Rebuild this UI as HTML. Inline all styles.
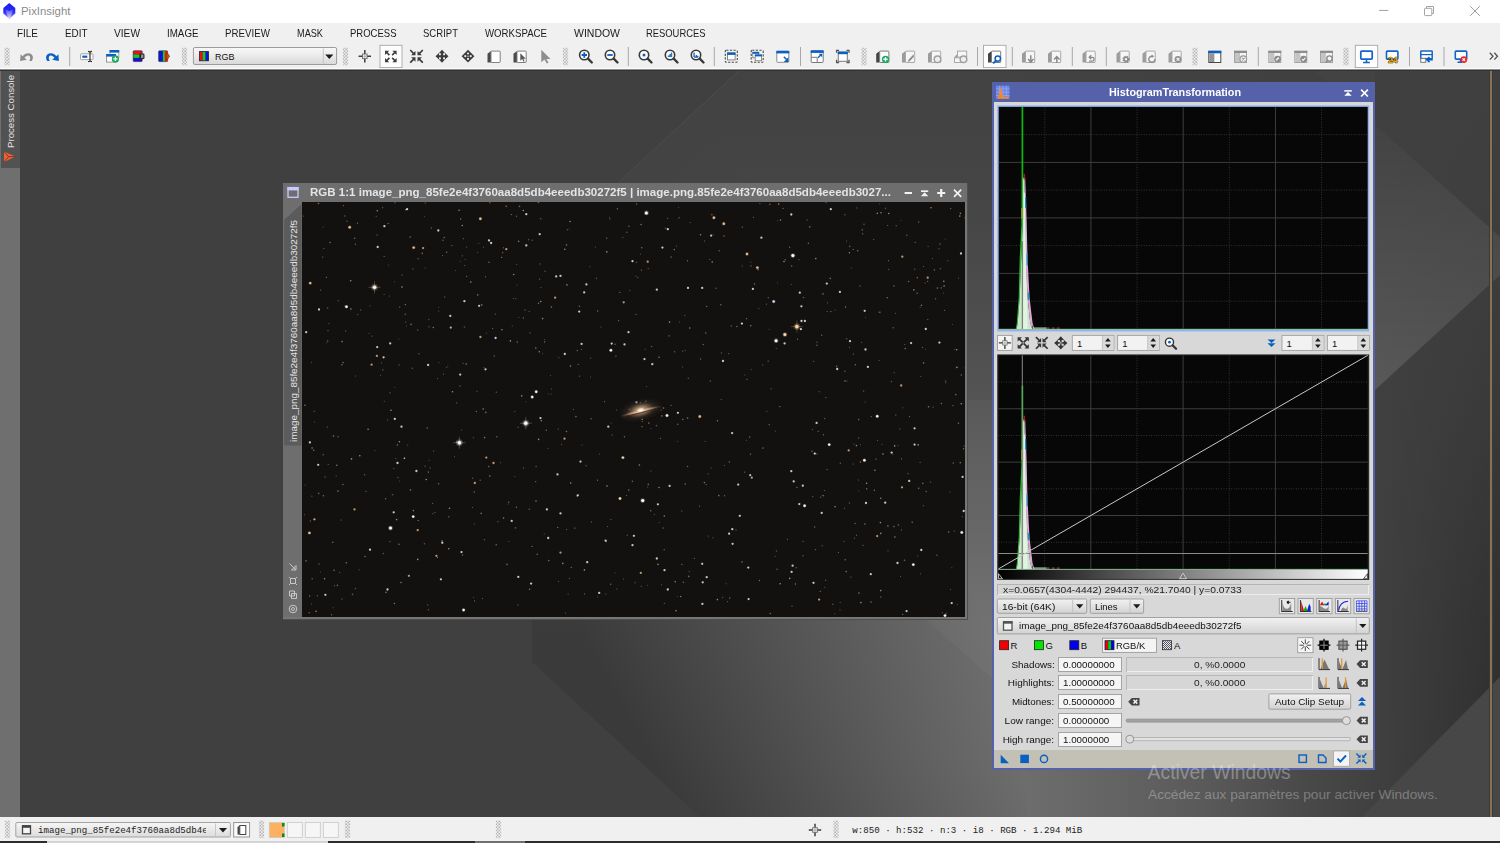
<!DOCTYPE html>
<html>
<head>
<meta charset="utf-8">
<title>PixInsight</title>
<style>
html,body{margin:0;padding:0;}
body{width:1500px;height:843px;overflow:hidden;position:relative;background:#404040;font-family:"Liberation Sans",sans-serif;font-size:10px;color:#000;}
.abs{position:absolute;}
#titlebar{left:0;top:0;width:1500px;height:23px;background:#fff;}
#titlebar .t{left:21px;top:5px;font-size:11.4px;color:#8a8a8a;}
#menubar{left:0;top:23px;width:1500px;height:21px;background:#f0f0f0;}
#menubar span{position:absolute;top:3.5px;font-size:10.8px;color:#1a1a1a;transform-origin:0 50%;white-space:nowrap;}
#toolbar{left:0;top:44px;width:1500px;height:24px;background:#f0f0f0;border-bottom:1px solid #fcfcfc;}
#tbline{left:0;top:69px;width:1500px;height:2px;background:linear-gradient(#8c8c8c 0,#8c8c8c 50%,#343434 50%,#343434 100%);}
#statusbar{left:0;top:817px;width:1500px;height:24px;background:#f0f0f0;}
#statusbot{left:0;top:841.4px;width:1500px;height:1.6px;background:linear-gradient(90deg,#2c2c2c 0,#2c2c2c 47px,#d4d4d4 47px,#d4d4d4 328px,#2c2c2c 328px,#2c2c2c 475px,#707070 475px,#707070 525px,#2c2c2c 525px);}
.mono{font-family:"Liberation Mono",monospace;}
#leftstrip{left:0;top:70px;width:20px;height:747px;background:#6f6f6f;}
#pctab{left:1px;top:70px;width:19px;height:98px;background:#525252;}
.vtext{position:absolute;transform-origin:0 0;transform:rotate(-90deg);white-space:nowrap;}
/* image window */
#imgwin{left:283px;top:183px;width:685px;height:436.7px;background:#6e6e6e;}
#imgtitle{left:27px;top:4px;font-size:10px;font-weight:bold;color:#e4e4e4;white-space:nowrap;transform-origin:0 50%;}
#imgarea{left:18.5px;top:19px;width:663.5px;height:414.5px;background:#121110;overflow:hidden;}
/* histogram panel */
#hpanel{left:992px;top:82.3px;width:383px;height:687.7px;background:#5561a9;}
.lbl{position:absolute;font-size:9.5px;color:#111;white-space:nowrap;}
.edit{position:absolute;background:#f6f6f6;border:1px solid #a8a8a8;box-sizing:border-box;font-size:9.5px;color:#111;white-space:nowrap;}
#h1{transform:scaleX(1.0798)}
#h6{transform:scaleX(1.0819)}
#h7{transform:scaleX(1.0737)}
#h8{transform:scaleX(0.9948)}
#h9{transform:scaleX(1.0429)}
#h13{transform:scaleX(0.9911)}
#h15{transform:scaleX(1.0375)}
#h16{transform:scaleX(1.0298)}
#h17{transform:scaleX(1.0483)}
#h18{transform:scaleX(1.0298)}
#h19{transform:scaleX(1.0270)}
#h20{transform:scaleX(1.0298)}
#h21{transform:scaleX(1.0507)}
#h22{transform:scaleX(1.0307)}
#h23{transform:scaleX(1.0483)}
#h24{transform:scaleX(1.0307)}
#h25{transform:scaleX(1.0670)}
#h26{transform:scaleX(1.0670)}
#h27{transform:scaleX(1.0452)}
#m1{transform:scaleX(0.9205)}
#m2{transform:scaleX(0.9149)}
#m3{transform:scaleX(0.9422)}
#m4{transform:scaleX(0.9053)}
#m5{transform:scaleX(0.9037)}
#m6{transform:scaleX(0.8494)}
#m7{transform:scaleX(0.8805)}
#m8{transform:scaleX(0.8840)}
#m9{transform:scaleX(0.8935)}
#m10{transform:scaleX(0.9710)}
#m11{transform:scaleX(0.8698)}
#imgtitle{transform:scaleX(1.1536)}
#imgvt{transform:rotate(-90deg) scaleX(1.0401)}
#pctext{transform:rotate(-90deg) scaleX(1.0165)}
</style>
</head>
<body>
<svg class="abs" style="left:0;top:70px" width="1500" height="747" viewBox="0 70 1500 747">
<defs>
<linearGradient id="bgL" x1="678" y1="811.800" x2="999.500" y2="639.500" gradientUnits="userSpaceOnUse">
<stop offset="0" stop-color="#3a3a3a"/><stop offset="1" stop-color="#747474"/>
</linearGradient>
<linearGradient id="bgR" x1="1027" y1="0" x2="1500" y2="0" gradientUnits="userSpaceOnUse">
<stop offset="0" stop-color="#6d6d6d"/><stop offset="0.37" stop-color="#5a5a5a"/><stop offset="0.6" stop-color="#484848"/><stop offset="0.738" stop-color="#404040"/><stop offset="1" stop-color="#2f2f2f"/>
</linearGradient>
<linearGradient id="bgv" x1="0" y1="70" x2="0" y2="760" gradientUnits="userSpaceOnUse">
<stop offset="0" stop-color="#404040" stop-opacity="0.96"/><stop offset="0.19" stop-color="#404040" stop-opacity="0.9"/><stop offset="0.48" stop-color="#404040" stop-opacity="0.62"/><stop offset="0.8" stop-color="#404040" stop-opacity="0.12"/><stop offset="1" stop-color="#404040" stop-opacity="0"/>
</linearGradient>
<linearGradient id="bgl" x1="0" y1="120" x2="0" y2="390" gradientUnits="userSpaceOnUse"><stop offset="0" stop-color="#fff" stop-opacity="0.015"/><stop offset="1" stop-color="#fff" stop-opacity="0.13"/></linearGradient>
</defs>
<rect x="0" y="70" width="1500" height="747" fill="#404040"/>
<polygon points="740,70 532,262 532,662 700,817 1027,817 1027,70" fill="url(#bgL)"/>
<polygon points="1027,70 1027,817 1362,817 1500,677 1500,70" fill="url(#bgR)"/>
<polygon points="740,70 532,262 532,662 700,817 1362,817 1500,677 1500,70" fill="url(#bgv)"/>
<polygon points="926,620 1027,709 1027,400 968,400 968,620" fill="#fff" fill-opacity="0.03"/>
<polygon points="1314,70 1500,237 1500,275 1375,390 1375,70" fill="url(#bgl)"/>
<polygon points="1500,677 1362,817 1500,817" fill="#474747"/>
<rect x="1489" y="70" width="4" height="747" fill="#383b3e"/>
<rect x="1490" y="70" width="2" height="747" fill="#8a7152"/>
</svg>

<!--LEFT-->
<div id="leftstrip" class="abs"></div>
<div id="pctab" class="abs"></div>
<span id="pctext" class="vtext" style="left:4.500px;top:148px;font-size:9.500px;color:#e0e0e0;">Process Console</span>
<svg class="abs" style="left:3px;top:150px" width="14" height="14" viewBox="0 0 14 14"><path d="M1 1.500L12.500 6.500L1 12Z" fill="#e8623a"/><path d="M1 1.500L5.500 6.700L1 12" fill="none" stroke="#7a2a14" stroke-width="0.800"/><path d="M5.500 6.700L12.500 6.500" stroke="#7a2a14" stroke-width="0.800"/></svg>
<!--CHROME-->
<div id="titlebar" class="abs"><svg class="abs" style="left:0;top:0" width="1500" height="23" viewBox="0 0 1500 23">
<defs><linearGradient id="pilogo" x1="0" y1="0" x2="0" y2="1"><stop offset="0" stop-color="#1a1aff"/><stop offset="0.55" stop-color="#2a2af0"/><stop offset="1" stop-color="#9a9af8"/></linearGradient>
<linearGradient id="pilogo2" x1="0" y1="0" x2="0" y2="1"><stop offset="0" stop-color="#5a5af4"/><stop offset="1" stop-color="#e8e8ff"/></linearGradient></defs>
<path d="M9.300 3L15.300 8V13.500L9.300 18.800L3.300 13.500V8Z" fill="url(#pilogo)"/>
<path d="M5.500 9.500L9.300 11L13 9.500L10.500 17.500L9.300 18.600L8 17.500Z" fill="url(#pilogo2)" fill-opacity="0.85"/>
<path d="M1379 10.400H1388.300" stroke="#a0a0a0" stroke-width="1"/>
<rect x="1424.500" y="8.300" width="7.300" height="7.300" rx="0.800" fill="#fff" stroke="#a4a4a4" stroke-width="1"/><path d="M1426.500 8.300V6.500H1433.500V13.500H1431.800" fill="none" stroke="#a4a4a4" stroke-width="1"/>
<path d="M1470.200 6.200L1479.800 15.800M1479.800 6.200L1470.200 15.800" stroke="#909090" stroke-width="0.900"/>
</svg>
<span class="abs t">PixInsight</span></div>
<div id="menubar" class="abs">
<span id="m1" style="left:17px">FILE</span><span id="m2" style="left:65px">EDIT</span><span id="m3" style="left:114px">VIEW</span><span id="m4" style="left:167px">IMAGE</span><span id="m5" style="left:225px">PREVIEW</span><span id="m6" style="left:297px">MASK</span><span id="m7" style="left:349.5px">PROCESS</span><span id="m8" style="left:422.5px">SCRIPT</span><span id="m9" style="left:484.5px">WORKSPACE</span><span id="m10" style="left:573.5px">WINDOW</span><span id="m11" style="left:646px">RESOURCES</span>
</div>
<div id="toolbar" class="abs"><svg class="abs" style="left:0;top:0" width="1500" height="25" viewBox="0 0 1500 25"><defs><pattern id="gripp" width="3.125" height="3.125" patternUnits="userSpaceOnUse"><rect x="0.300" y="0.300" width="1.100" height="1.100" fill="#808080"/><rect x="1.860" y="1.860" width="1.100" height="1.100" fill="#808080"/></pattern><pattern id="gripq" width="2" height="2" patternUnits="userSpaceOnUse"><rect width="1" height="1" fill="#7a7a7a"/><rect x="1" y="1" width="1" height="1" fill="#7a7a7a"/></pattern><linearGradient id="cbg" x1="0" y1="0" x2="0" y2="1"><stop offset="0" stop-color="#f8f8f8"/><stop offset="0.45" stop-color="#ececec"/><stop offset="1" stop-color="#d8d8d8"/></linearGradient></defs><rect x="4.5" y="3.700" width="5.200" height="17.500" fill="url(#gripp)"/><path d="M20.100 17L20.600 10.300L22.600 12.200C24.500 9.500 28.500 8.300 31 10C33.500 11.800 33.300 14.600 31.800 17L29.300 17C30.500 14.800 30.600 13 29.500 12C28 10.800 25.800 12 24.400 13.800L26.800 15.800Z" fill="#8c8c8c"/><g transform="translate(79,0) scale(-1,1)"><path d="M20.100 17L20.600 10.300L22.600 12.200C24.500 9.500 28.500 8.300 31 10C33.500 11.800 33.300 14.600 31.800 17L29.300 17C30.500 14.800 30.600 13 29.500 12C28 10.800 25.800 12 24.400 13.800L26.800 15.800Z" fill="#0a5fc2"/></g><rect x="69.2" y="3" width="1" height="19" fill="#a8a8a8"/><rect x="80.500" y="9.800" width="12.500" height="5.800" rx="0.800" fill="#fff" stroke="#a4a4a4" stroke-width="1"/><rect x="82.300" y="11.600" width="5" height="2.200" fill="#0a5fc2"/><path d="M88 7.300Q90 7.300 90 8.500Q90 7.300 92 7.300M88 17.700Q90 17.700 90 16.500Q90 17.700 92 17.700M90 8V17" stroke="#333" stroke-width="1.200" fill="none"/><rect x="110" y="6.500" width="8.800" height="7" fill="#fff" stroke="#a0a0a0" stroke-width="0.900"/><rect x="109.600" y="6" width="9.600" height="2.600" fill="#0a5fc2"/><rect x="106.600" y="10.500" width="9" height="7.600" fill="#fff" stroke="#8a8a8a" stroke-width="0.900"/><rect x="106.200" y="10" width="9.800" height="2.600" fill="#0a5fc2"/><circle cx="115.400" cy="14.900" r="3.600" fill="#1aa860"/><path d="M115.400 12.700v4.400M113.200 14.900h4.400" stroke="#e8fff0" stroke-width="1.400"/><rect x="133.200" y="6.800" width="9" height="10.800" rx="0.800" fill="#1010e0" stroke="#402020" stroke-width="0.600"/><rect x="133.500" y="7.100" width="8.400" height="3.400" fill="#f01010"/><rect x="133.500" y="10.500" width="8.400" height="3.400" fill="#10d010"/><rect x="139.300" y="9.600" width="5.200" height="5.400" rx="1.300" fill="#2a2a2a"/><rect x="141" y="10.600" width="2.400" height="3.400" rx="0.600" fill="#909090"/><rect x="158.600" y="6.800" width="9" height="10.800" rx="0.800" fill="#10d010" stroke="#202040" stroke-width="0.600"/><rect x="158.900" y="7.100" width="4" height="10.200" fill="#1010e0"/><rect x="165" y="7.100" width="2.400" height="10.200" fill="#f01010"/><path d="M164.800 9.300H167.800L170 12.300L167.800 15.300H164.800Z" fill="#f01010"/><path d="M167.300 10.300L169.300 12.300L167.500 14.500Z" fill="#10c010"/><rect x="181.9" y="3.700" width="5.200" height="17.500" fill="url(#gripp)"/><rect x="193.400" y="3.500" width="143.200" height="17" rx="1.500" fill="url(#cbg)" stroke="#9c9c9c" stroke-width="1"/><rect x="199.500" y="7.600" width="9" height="9.200" fill="#1010e0" stroke="#222" stroke-width="0.800"/><rect x="199.900" y="8" width="2.800" height="8.400" fill="#f01010"/><rect x="202.700" y="8" width="2.700" height="8.400" fill="#10d010"/><text x="215" y="15.700" font-family="Liberation Sans" font-size="9.600" fill="#111" textLength="19.500" lengthAdjust="spacingAndGlyphs">RGB</text><path d="M323.300 4.500V19.500" stroke="#c4c4c4" stroke-width="1"/><path d="M325.200 10.400H333.400L329.300 14.900Z" fill="#1a1a1a"/><rect x="342.9" y="3.700" width="5.200" height="17.500" fill="url(#gripp)"/><g transform="translate(356.8,4.3)"><path d="M8 1.800v12.400M1.800 8h12.400" stroke="#3c3c3c" stroke-width="1.500"/><rect x="5.700" y="5.700" width="4.600" height="4.600" fill="#f0f0f0" stroke="#6a6a6a" stroke-width="0.900"/><path d="M8 6.500v3M6.500 8h3" stroke="#9a9a9a" stroke-width="0.700"/></g><rect x="380" y="1.300" width="22" height="22.300" fill="#fdfdfd" stroke="#a6a6a6" stroke-width="0.900"/><g transform="translate(382.8,4.5)"><g transform="translate(8,8) scale(1,1)"><path d="M1.400 1.400L4.500 4.500" stroke="#3c3c3c" stroke-width="1.700"/><path d="M5.800 1.600V5.800H1.600Z" fill="#3c3c3c"/></g><g transform="translate(8,8) scale(-1,1)"><path d="M1.400 1.400L4.500 4.500" stroke="#3c3c3c" stroke-width="1.700"/><path d="M5.800 1.600V5.800H1.600Z" fill="#3c3c3c"/></g><g transform="translate(8,8) scale(1,-1)"><path d="M1.400 1.400L4.500 4.500" stroke="#3c3c3c" stroke-width="1.700"/><path d="M5.800 1.600V5.800H1.600Z" fill="#3c3c3c"/></g><g transform="translate(8,8) scale(-1,-1)"><path d="M1.400 1.400L4.500 4.500" stroke="#3c3c3c" stroke-width="1.700"/><path d="M5.800 1.600V5.800H1.600Z" fill="#3c3c3c"/></g></g><g transform="translate(408.5,4.3)"><g transform="translate(8,8) scale(1,1)"><path d="M2.500 2.500L6.300 6.300" stroke="#3c3c3c" stroke-width="1.700"/><path d="M1 5.400V1H5.400Z" fill="#3c3c3c"/></g><g transform="translate(8,8) scale(-1,1)"><path d="M2.500 2.500L6.300 6.300" stroke="#3c3c3c" stroke-width="1.700"/><path d="M1 5.400V1H5.400Z" fill="#3c3c3c"/></g><g transform="translate(8,8) scale(1,-1)"><path d="M2.500 2.500L6.300 6.300" stroke="#3c3c3c" stroke-width="1.700"/><path d="M1 5.400V1H5.400Z" fill="#3c3c3c"/></g><g transform="translate(8,8) scale(-1,-1)"><path d="M2.500 2.500L6.300 6.300" stroke="#3c3c3c" stroke-width="1.700"/><path d="M1 5.400V1H5.400Z" fill="#3c3c3c"/></g></g><g transform="translate(434,4.3)"><g transform="rotate(0 8 8)"><path d="M8 8V4" stroke="#3c3c3c" stroke-width="2.200"/><path d="M4.800 5L8 1.500L11.200 5Z" fill="#3c3c3c"/></g><g transform="rotate(90 8 8)"><path d="M8 8V4" stroke="#3c3c3c" stroke-width="2.200"/><path d="M4.800 5L8 1.500L11.200 5Z" fill="#3c3c3c"/></g><g transform="rotate(180 8 8)"><path d="M8 8V4" stroke="#3c3c3c" stroke-width="2.200"/><path d="M4.800 5L8 1.500L11.200 5Z" fill="#3c3c3c"/></g><g transform="rotate(270 8 8)"><path d="M8 8V4" stroke="#3c3c3c" stroke-width="2.200"/><path d="M4.800 5L8 1.500L11.200 5Z" fill="#3c3c3c"/></g></g><g transform="translate(460,4.2)"><path d="M8 1.600L14.400 8L8 14.400L1.600 8Z" fill="#3c3c3c"/><circle cx="8" cy="5.300" r="1.100" fill="#e8e8e8"/><circle cx="8" cy="10.700" r="1.100" fill="#e8e8e8"/><circle cx="5.300" cy="8" r="1.100" fill="#e8e8e8"/><circle cx="10.700" cy="8" r="1.100" fill="#e8e8e8"/><circle cx="8" cy="8" r="0.800" fill="#bbb"/></g><g transform="translate(486,4.3)"><path d="M1.500 5.500L5 2.800V14.200H1.500Z" fill="#4a4a4a"/><rect x="5" y="2.800" width="9.200" height="11.400" rx="0.600" fill="#fff" stroke="#808080" stroke-width="1"/></g><g transform="translate(512,4.3)"><path d="M1.500 5.500L5 2.800V14.200H1.500Z" fill="#4a4a4a"/><rect x="5" y="2.800" width="9.200" height="11.400" rx="0.600" fill="#fff" stroke="#808080" stroke-width="1"/><path d="M8.300 5V12.500L10.200 10.800L11.500 13.500L12.600 13L11.400 10.400H13.800Z" fill="#5a5a5a"/></g><g transform="translate(537.5,4.3)"><path d="M3.800 1.500V14L7 11.200L9.300 15.200L11 14.400L8.900 10.600H13Z" fill="#8e8e8e"/></g><rect x="562.9" y="3.700" width="5.200" height="17.500" fill="url(#gripp)"/><g transform="translate(577.8,4.3)"><circle cx="6.500" cy="6.700" r="4.700" fill="#fdfdfd" stroke="#3a3a3a" stroke-width="1.600"/><path d="M10.200 10.400L14 14.200" stroke="#3a3a3a" stroke-width="2.400" stroke-linecap="round"/><path d="M6.500 4V9.400M3.800 6.700H9.200" stroke="#0a5fc2" stroke-width="1.800"/></g><g transform="translate(603.5,4.3)"><circle cx="6.500" cy="6.700" r="4.700" fill="#fdfdfd" stroke="#3a3a3a" stroke-width="1.600"/><path d="M10.200 10.400L14 14.200" stroke="#3a3a3a" stroke-width="2.400" stroke-linecap="round"/><path d="M3.800 6.700H9.200" stroke="#0a5fc2" stroke-width="1.800"/></g><rect x="627.8" y="3" width="1" height="19" fill="#a8a8a8"/><g transform="translate(637.5,4.3)"><circle cx="6.500" cy="6.700" r="4.700" fill="#fdfdfd" stroke="#3a3a3a" stroke-width="1.600"/><path d="M10.200 10.400L14 14.200" stroke="#3a3a3a" stroke-width="2.400" stroke-linecap="round"/><circle cx="6.500" cy="6.700" r="1.500" fill="#0a5fc2"/></g><g transform="translate(663.5,4.3)"><circle cx="6.500" cy="6.700" r="4.700" fill="#fdfdfd" stroke="#3a3a3a" stroke-width="1.600"/><path d="M10.200 10.400L14 14.200" stroke="#3a3a3a" stroke-width="2.400" stroke-linecap="round"/><path d="M4.300 8.800V7.200H5.800V5.700H7.300V4.300H8.700V8.800Z" fill="#0a5fc2" fill-opacity="0.850"/></g><g transform="translate(689.5,4.3)"><circle cx="6.500" cy="6.700" r="4.700" fill="#fdfdfd" stroke="#3a3a3a" stroke-width="1.600"/><path d="M10.200 10.400L14 14.200" stroke="#3a3a3a" stroke-width="2.400" stroke-linecap="round"/><path d="M4.600 4.200V8.800M4.600 8.800H8.600M6.800 6.800v2M8.300 7.500v1.300" stroke="#0a5fc2" stroke-width="1.300" fill="none"/></g><rect x="713.8" y="3" width="1" height="19" fill="#a8a8a8"/><g transform="translate(723.3,4.3)"><rect x="2" y="2" width="12" height="12" rx="1" fill="none" stroke="#4a4a4a" stroke-width="1.100" stroke-dasharray="2.200 1.400"/><rect x="4.200" y="4.600" width="7.600" height="7" fill="#fff" stroke="#7a7a7a" stroke-width="0.900"/><rect x="3.800" y="4.200" width="8.400" height="2.400" fill="#0a5fc2"/></g><g transform="translate(749.2,4.3)"><rect x="2" y="2" width="12" height="12" rx="1" fill="none" stroke="#4a4a4a" stroke-width="1.100" stroke-dasharray="2.200 1.400"/><rect x="3.600" y="4" width="6" height="5.500" fill="#fff" stroke="#7a7a7a" stroke-width="0.800"/><rect x="3.300" y="3.600" width="6.600" height="1.900" fill="#0a5fc2"/><rect x="6" y="6.600" width="6.400" height="5.800" fill="#fff" stroke="#7a7a7a" stroke-width="0.800"/><rect x="5.700" y="6.200" width="7" height="1.900" fill="#0a5fc2"/></g><g transform="translate(774.8,4.3)"><rect x="2" y="3" width="12" height="11" rx="0.800" fill="#fff" stroke="#8a8a8a" stroke-width="1"/><rect x="1.500" y="2.500" width="13" height="2.600" fill="#0a5fc2"/><path d="M9 8.500L12 11.500" stroke="#0a5fc2" stroke-width="1.400"/><path d="M13.600 9V13.600H9Z" fill="#0a5fc2"/></g><rect x="800.0" y="3" width="1" height="19" fill="#a8a8a8"/><g transform="translate(809.2,4.3)"><rect x="2" y="2.600" width="12" height="11.600" rx="0.800" fill="#fff" stroke="#7a7a7a" stroke-width="1"/><rect x="1.500" y="2" width="13" height="2.600" fill="#0a5fc2"/><path d="M2 9H8V14" fill="none" stroke="#7a7a7a" stroke-width="1"/><path d="M8.800 9.400L12 6.200" stroke="#0a5fc2" stroke-width="1.300"/><path d="M9.500 5.500H13V9Z" fill="#0a5fc2"/></g><g transform="translate(834.8,4.3)"><rect x="3.500" y="3.800" width="9" height="9.200" fill="#fff" stroke="#7a7a7a" stroke-width="1"/><rect x="3" y="3.300" width="10" height="2.600" fill="#0a5fc2"/><path d="M1.800 4.500V2H4.300M11.700 2H14.200V4.500M14.200 11.500V14.200H11.700M4.300 14.200H1.800V11.500" fill="none" stroke="#555" stroke-width="1.300"/></g><rect x="861.4" y="3.700" width="5.200" height="17.500" fill="url(#gripp)"/><g transform="translate(874.7,4.3)"><path d="M1.500 5.500L5 2.800V14.200H1.500Z" fill="#444"/><rect x="5" y="2.800" width="9.200" height="11.400" rx="0.600" fill="#fff" stroke="#7a7a7a" stroke-width="1"/><circle cx="10.800" cy="11" r="3.600" fill="#1aa860"/><path d="M10.800 8.800v4.400M8.600 11h4.400" stroke="#e8fff0" stroke-width="1.400"/></g><g transform="translate(900.5,4.3)"><path d="M1.500 5.500L5 2.800V14.200H1.500Z" fill="#9c9c9c"/><rect x="5" y="2.800" width="9.200" height="11.400" rx="0.600" fill="#f6f6f6" stroke="#a8a8a8" stroke-width="1"/><path d="M7 13.800L7.600 11.600L12.600 6.200L14.300 7.800L9.200 13.200Z" fill="#8c8c8c" stroke="#f0f0f0" stroke-width="0.500"/></g><g transform="translate(926.5,4.3)"><path d="M1.500 5.500L5 2.800V14.200H1.500Z" fill="#9c9c9c"/><rect x="5" y="2.800" width="9.200" height="11.400" rx="0.600" fill="#f6f6f6" stroke="#a8a8a8" stroke-width="1"/><circle cx="11" cy="11" r="3.300" fill="#eee" stroke="#a0a0a0" stroke-width="1.500"/></g><g transform="translate(952.5,4.3)"><path d="M1.800 9L5 5.500V14.200H1.800Z" fill="#9c9c9c"/><rect x="5" y="2.800" width="9.200" height="6" fill="#f6f6f6" stroke="#a8a8a8" stroke-width="1"/><rect x="2" y="9.500" width="8" height="4.700" fill="#f6f6f6" stroke="#a8a8a8" stroke-width="1"/><circle cx="11" cy="11" r="3.300" fill="#eee" stroke="#a0a0a0" stroke-width="1.500"/></g><rect x="977.0" y="3" width="1" height="19" fill="#a8a8a8"/><rect x="983.5" y="1.300" width="22.5" height="22.300" fill="#fdfdfd" stroke="#a6a6a6" stroke-width="0.900"/><g transform="translate(986.5,4.3)"><path d="M1.500 5.500L5 2.800V14.200H1.500Z" fill="#444"/><rect x="5" y="2.800" width="9.200" height="11.400" rx="0.600" fill="#fff" stroke="#7a7a7a" stroke-width="1"/><circle cx="11.300" cy="10.300" r="2.700" fill="#fff" stroke="#0a5fc2" stroke-width="1.500"/><path d="M9.300 12.400L7.200 14.600" stroke="#0a5fc2" stroke-width="1.800" stroke-linecap="round"/></g><rect x="1011.8" y="3" width="1" height="19" fill="#a8a8a8"/><g transform="translate(1020.5,4.3)"><path d="M1.500 5.500L5 2.800V14.200H1.500Z" fill="#9c9c9c"/><rect x="5" y="2.800" width="9.200" height="11.400" rx="0.600" fill="#f6f6f6" stroke="#a8a8a8" stroke-width="1"/><path d="M10.300 7V13.500M7.600 10.800L10.300 13.800L13 10.800" fill="none" stroke="#8a8a8a" stroke-width="1.500"/></g><g transform="translate(1046.5,4.3)"><path d="M1.500 5.500L5 2.800V14.200H1.500Z" fill="#9c9c9c"/><rect x="5" y="2.800" width="9.200" height="11.400" rx="0.600" fill="#f6f6f6" stroke="#a8a8a8" stroke-width="1"/><path d="M10.300 14.500V8.500M7.600 11.200L10.300 8.200L13 11.200" fill="none" stroke="#8a8a8a" stroke-width="1.500"/></g><rect x="1071.8" y="3" width="1" height="19" fill="#a8a8a8"/><g transform="translate(1081,4.3)"><path d="M1.500 5.500L5 2.800V14.200H1.500Z" fill="#9c9c9c"/><rect x="5" y="2.800" width="9.200" height="11.400" rx="0.600" fill="#f6f6f6" stroke="#a8a8a8" stroke-width="1"/><path d="M8 12.800H11.500C13.500 12.800 13.500 9 11.500 9H8.500M10.300 7L8.200 9L10.300 11" fill="none" stroke="#8a8a8a" stroke-width="1.300"/></g><rect x="1105.8" y="3" width="1" height="19" fill="#a8a8a8"/><g transform="translate(1115,4.3)"><path d="M1.500 5.500L5 2.800V14.200H1.500Z" fill="#9c9c9c"/><rect x="5" y="2.800" width="9.200" height="11.400" rx="0.600" fill="#f6f6f6" stroke="#a8a8a8" stroke-width="1"/><circle cx="11" cy="11" r="2.500" fill="none" stroke="#8a8a8a" stroke-width="2.200" stroke-dasharray="1.300 0.700"/><circle cx="11" cy="11" r="1.900" fill="none" stroke="#8a8a8a" stroke-width="1.200"/></g><g transform="translate(1141,4.3)"><path d="M1.500 5.500L5 2.800V14.200H1.500Z" fill="#9c9c9c"/><rect x="5" y="2.800" width="9.200" height="11.400" rx="0.600" fill="#f6f6f6" stroke="#a8a8a8" stroke-width="1"/><path d="M13.800 11A3 3 0 1 1 11 8" fill="none" stroke="#8a8a8a" stroke-width="1.400"/><path d="M10.600 6.200L13.200 8L10.600 9.800Z" fill="#8a8a8a"/></g><g transform="translate(1167,4.3)"><path d="M1.500 5.500L5 2.800V14.200H1.500Z" fill="#9c9c9c"/><rect x="5" y="2.800" width="9.200" height="11.400" rx="0.600" fill="#f6f6f6" stroke="#a8a8a8" stroke-width="1"/><circle cx="11" cy="11" r="3.400" fill="#8f8f8f"/><path d="M9.600 9.600l2.800 2.800M12.400 9.600L9.600 12.400" stroke="#f4f4f4" stroke-width="1.200"/></g><rect x="1192.4" y="3.700" width="5.200" height="17.500" fill="url(#gripp)"/><g transform="translate(1206.8,4.3)"><rect x="2" y="3" width="12" height="11.200" fill="#fff" stroke="#4a4a4a" stroke-width="1"/><rect x="1.500" y="2.500" width="13" height="2.500" fill="#0a5fc2"/><rect x="2.500" y="5" width="5" height="8.700" fill="#b0b0b0"/><rect x="2.500" y="5" width="5" height="8.700" fill="url(#gripq)"/></g><g transform="translate(1232.5,4.3)"><rect x="2" y="3" width="12" height="11.200" fill="#f4f4f4" stroke="#a4a4a4" stroke-width="1"/><rect x="1.500" y="2.500" width="13" height="2.200" fill="#8e8e8e"/><rect x="2.500" y="4.700" width="5" height="9" fill="#c4c4c4"/><circle cx="10.800" cy="10.800" r="3.300" fill="#f2f2f2" stroke="#9a9a9a" stroke-width="1.200"/><path d="M9.500 9.500l2.600 2.600M12.100 9.500L9.500 12.100" stroke="#9a9a9a" stroke-width="1.200"/></g><rect x="1257.8" y="3" width="1" height="19" fill="#a8a8a8"/><g transform="translate(1266.8,4.3)"><rect x="2" y="3" width="12" height="11.200" fill="#f4f4f4" stroke="#a4a4a4" stroke-width="1"/><rect x="1.500" y="2.500" width="13" height="2.200" fill="#8e8e8e"/><rect x="2.500" y="4.700" width="5" height="9" fill="#c4c4c4"/><circle cx="10.800" cy="10.800" r="3.400" fill="#8a8a8a"/><path d="M9.300 12L12 9.300" stroke="#f4f4f4" stroke-width="1.600"/></g><g transform="translate(1292.8,4.3)"><rect x="2" y="3" width="12" height="11.200" fill="#f4f4f4" stroke="#a4a4a4" stroke-width="1"/><rect x="1.500" y="2.500" width="13" height="2.200" fill="#8e8e8e"/><rect x="2.500" y="4.700" width="5" height="9" fill="#c4c4c4"/><circle cx="10.800" cy="10.800" r="3.400" fill="#8a8a8a"/><path d="M9.200 10.800L10.400 12.100L12.500 9.600" fill="none" stroke="#f4f4f4" stroke-width="1.200"/></g><g transform="translate(1318.5,4.3)"><rect x="2" y="3" width="12" height="11.200" fill="#f4f4f4" stroke="#a4a4a4" stroke-width="1"/><rect x="1.500" y="2.500" width="13" height="2.200" fill="#8e8e8e"/><rect x="2.500" y="4.700" width="5" height="9" fill="#c4c4c4"/><circle cx="11" cy="10.300" r="2.700" fill="#f4f4f4" stroke="#8a8a8a" stroke-width="1.400"/><path d="M9 12.300L7.300 14.200" stroke="#8a8a8a" stroke-width="1.600"/></g><rect x="1343.4" y="3.700" width="5.200" height="17.500" fill="url(#gripp)"/><rect x="1355.3" y="1.300" width="22.40000000000009" height="22.300" fill="#fdfdfd" stroke="#a6a6a6" stroke-width="0.900"/><g transform="translate(1358.5,4.3)"><rect x="2.300" y="2.800" width="11.400" height="8" rx="0.800" fill="#fdfdfd" stroke="#1464c8" stroke-width="1.700"/><path d="M8 11V13.800M4.600 14.300H11.400" stroke="#1464c8" stroke-width="1.500"/></g><g transform="translate(1384.2,4.3)"><rect x="2.300" y="2.800" width="11.400" height="8" rx="0.800" fill="#fdfdfd" stroke="#1464c8" stroke-width="1.600"/><text x="8.600" y="14.800" font-family="Liberation Sans" font-weight="bold" font-size="8.800" text-anchor="middle" fill="#e8a800" stroke="#2a2000" stroke-width="0.700" paint-order="stroke">24</text></g><rect x="1409.0" y="3" width="1" height="19" fill="#a8a8a8"/><g transform="translate(1418.5,4.3)"><rect x="2.300" y="2.600" width="11.400" height="7.800" rx="0.600" fill="#fdfdfd" stroke="#1464c8" stroke-width="1.500"/><path d="M2.300 6.300H13.700" stroke="#1464c8" stroke-width="1.200"/><rect x="2.300" y="10" width="5" height="4" fill="#fff" stroke="#6a6a6a" stroke-width="0.900"/><path d="M14.300 11.300H8.800M11 8.800L8.300 11.300L11 13.800" fill="none" stroke="#0a5fc2" stroke-width="1.600"/></g><rect x="1443.5" y="3" width="1" height="19" fill="#a8a8a8"/><g transform="translate(1453,4.3)"><rect x="2.300" y="2.800" width="11.400" height="8" rx="0.800" fill="#fdfdfd" stroke="#1464c8" stroke-width="1.600"/><path d="M7.500 11V13.500M4.500 14H9" stroke="#1464c8" stroke-width="1.400"/><circle cx="10.800" cy="11.300" r="3.400" fill="#e42828"/><path d="M9.500 10l2.600 2.600M12.100 10l-2.600 2.600" stroke="#fff" stroke-width="1.200"/></g><path d="M1489.800 8.800L1493 12.200L1489.800 15.600M1494.300 8.800L1497.500 12.200L1494.300 15.600" fill="none" stroke="#505050" stroke-width="1.300"/></svg></div>
<div id="tbline" class="abs"></div>
<div id="imgwin" class="abs">
<div class="abs" style="left:682px;top:19px;width:2px;height:417px;background:#767676"></div>
<div class="abs" style="left:0;top:433.500px;width:685px;height:2.200px;background:#767676"></div>
<div class="abs" style="left:684px;top:0;width:1px;height:436.700px;background:#4e4e4e"></div>
<div class="abs" style="left:0;top:435.700px;width:685px;height:1px;background:#4e4e4e"></div>
<svg class="abs" style="left:0;top:0" width="30" height="437" viewBox="0 0 30 437">
<polygon points="1.200,36 18.500,20.500 18.500,262.500 1.200,262.500" fill="#5b5b5b"/>
<path d="M1.200 36L18.500 20.500" stroke="#747474" stroke-width="1" fill="none"/>
<rect x="5" y="4.600" width="10" height="9.700" fill="#6e6e6e" stroke="#c9c9ff" stroke-width="1.300"/><rect x="4.400" y="4" width="11.200" height="3.400" fill="#c9c9ff"/>
<g stroke="#cfcfcf" stroke-width="0.900" fill="none">
<path d="M6.500 380.500L13 387M13 382.500V387H8.500Z"/>
<path d="M7.500 395.500H12.500V400.500H7.500ZM7.500 395.500L6 394M12.500 395.500L14 394M7.500 400.500L6 402M12.500 400.500L14 402"/>
<path d="M6.500 408H11.500V413H6.500ZM8.500 410.500H13.500V415.500H8.500Z"/>
<circle cx="10" cy="426" r="3.800"/><circle cx="10" cy="426" r="1.500"/>
</g>
</svg>
<span id="imgtitle" class="abs">RGB 1:1 image_png_85fe2e4f3760aa8d5db4eeedb30272f5 | image.png.85fe2e4f3760aa8d5db4eeedb3027...</span>
<span id="imgvt" class="vtext" style="left:5px;top:259px;font-size:9.500px;color:#e6e6e6;">image_png_85fe2e4f3760aa8d5db4eeedb30272f5</span>
<svg class="abs" style="left:615px;top:0" width="70" height="19" viewBox="0 0 70 19">
<g stroke="#f2f2f2" stroke-width="2" fill="none">
<path d="M6.600 10H14"/>
<path d="M23 8.200H30.200" stroke-width="1.700"/><path d="M26.600 9.300L30.300 13.200H22.900Z" fill="#f2f2f2" stroke="none"/>
<path d="M39.200 10H47.200M43.200 6V14" stroke-width="2.200"/>
<path d="M56 6.600L63.200 13.800M63.200 6.600L56 13.800" stroke-width="1.700"/>
</g></svg>
<div id="imgarea" class="abs"><svg class="abs" style="left:0;top:0" width="663.5" height="414.5" viewBox="0 0 663.5 414.5"><defs><filter id="sb" x="-2%" y="-2%" width="104%" height="104%"><feGaussianBlur stdDeviation="0.55"/></filter><radialGradient id="gal0"><stop offset="0" stop-color="#a48868" stop-opacity="0.850"/><stop offset="0.300" stop-color="#70594a" stop-opacity="0.600"/><stop offset="0.550" stop-color="#4a3c30" stop-opacity="0.340"/><stop offset="0.800" stop-color="#2c241e" stop-opacity="0.120"/><stop offset="1" stop-color="#201a14" stop-opacity="0"/></radialGradient><radialGradient id="gal1"><stop offset="0" stop-color="#ffecd0" stop-opacity="0.900"/><stop offset="0.450" stop-color="#d8b088" stop-opacity="0.450"/><stop offset="1" stop-color="#806040" stop-opacity="0"/></radialGradient><radialGradient id="gal2"><stop offset="0" stop-color="#ffe8cc" stop-opacity="0.950"/><stop offset="0.600" stop-color="#c4a078" stop-opacity="0.600"/><stop offset="1" stop-color="#805838" stop-opacity="0"/></radialGradient><radialGradient id="gal3"><stop offset="0" stop-color="#fff" stop-opacity="1"/><stop offset="0.600" stop-color="#fff0d8" stop-opacity="0.700"/><stop offset="1" stop-color="#e8c098" stop-opacity="0"/></radialGradient></defs><g filter="url(#sb)"><circle cx="214.7" cy="62.5" r="0.5" fill="#6a625c"/><circle cx="544.5" cy="39.0" r="0.5" fill="#6c6c6c"/><circle cx="142.3" cy="35.6" r="0.8" fill="#6a625c"/><circle cx="159.6" cy="228.1" r="0.5" fill="#6c6c6c"/><circle cx="82.1" cy="92.4" r="0.5" fill="#6c6c6c"/><circle cx="388.2" cy="20.5" r="0.6" fill="#6a625c"/><circle cx="369.1" cy="55.1" r="0.8" fill="#5c5a5e"/><circle cx="358.5" cy="236.4" r="0.6" fill="#6a625c"/><circle cx="385.6" cy="264.5" r="0.7" fill="#6a625c"/><circle cx="363.2" cy="26.0" r="0.5" fill="#6c6c6c"/><circle cx="136.6" cy="281.7" r="0.8" fill="#7a6450"/><circle cx="308.7" cy="382.3" r="0.7" fill="#7a6450"/><circle cx="164.7" cy="74.4" r="0.6" fill="#6a625c"/><circle cx="380.8" cy="217.4" r="0.7" fill="#8a7058"/><circle cx="297.6" cy="252.1" r="0.5" fill="#6a625c"/><circle cx="339.4" cy="68.3" r="0.7" fill="#5c5a5e"/><circle cx="618.8" cy="174.6" r="0.5" fill="#6c6c6c"/><circle cx="379.9" cy="362.4" r="0.7" fill="#7a6450"/><circle cx="461.0" cy="246.1" r="0.8" fill="#6a625c"/><circle cx="556.9" cy="391.1" r="0.8" fill="#8a7058"/><circle cx="440.3" cy="25.1" r="0.7" fill="#8a7058"/><circle cx="383.2" cy="282.0" r="0.8" fill="#7a6450"/><circle cx="475.1" cy="367.2" r="0.7" fill="#6a625c"/><circle cx="623.6" cy="147.2" r="0.5" fill="#54565e"/><circle cx="39.1" cy="318.0" r="0.6" fill="#8a7058"/><circle cx="164.2" cy="161.9" r="0.8" fill="#6a625c"/><circle cx="110.3" cy="166.3" r="0.7" fill="#5c5a5e"/><circle cx="543.2" cy="357.7" r="0.7" fill="#8a7058"/><circle cx="275.3" cy="148.5" r="0.8" fill="#5c5a5e"/><circle cx="100.1" cy="73.0" r="0.6" fill="#8a7058"/><circle cx="154.7" cy="200.8" r="0.6" fill="#7a6450"/><circle cx="186.9" cy="60.3" r="0.7" fill="#6c6c6c"/><circle cx="375.5" cy="394.6" r="0.5" fill="#54565e"/><circle cx="596.4" cy="322.9" r="0.8" fill="#54565e"/><circle cx="264.5" cy="42.9" r="0.8" fill="#6a625c"/><circle cx="126.4" cy="407.7" r="0.8" fill="#5c5a5e"/><circle cx="72.9" cy="248.7" r="0.5" fill="#6a625c"/><circle cx="375.8" cy="222.2" r="0.7" fill="#6c6c6c"/><circle cx="16.9" cy="362.0" r="0.8" fill="#5c5a5e"/><circle cx="420.6" cy="395.6" r="0.7" fill="#54565e"/><circle cx="81.4" cy="351.5" r="0.8" fill="#54565e"/><circle cx="320.8" cy="35.6" r="0.5" fill="#8a7058"/><circle cx="227.2" cy="109.6" r="0.6" fill="#6c6c6c"/><circle cx="15.3" cy="393.7" r="0.7" fill="#5c5a5e"/><circle cx="457.5" cy="378.5" r="0.7" fill="#8a7058"/><circle cx="572.4" cy="288.2" r="0.7" fill="#6c6c6c"/><circle cx="243.1" cy="69.2" r="0.6" fill="#6c6c6c"/><circle cx="359.1" cy="208.1" r="0.6" fill="#6c6c6c"/><circle cx="538.0" cy="407.8" r="0.6" fill="#5c5a5e"/><circle cx="542.6" cy="306.3" r="0.6" fill="#5c5a5e"/><circle cx="343.2" cy="147.2" r="0.5" fill="#6a625c"/><circle cx="523.8" cy="195.5" r="0.6" fill="#8a7058"/><circle cx="401.2" cy="142.5" r="0.7" fill="#7a6450"/><circle cx="53.4" cy="42.3" r="0.8" fill="#5c5a5e"/><circle cx="223.9" cy="199.8" r="0.5" fill="#54565e"/><circle cx="602.8" cy="142.4" r="0.5" fill="#8a7058"/><circle cx="79.5" cy="160.9" r="0.6" fill="#54565e"/><circle cx="589.4" cy="179.6" r="0.7" fill="#6a625c"/><circle cx="530.9" cy="402.3" r="0.8" fill="#54565e"/><circle cx="266.1" cy="392.0" r="0.6" fill="#5c5a5e"/><circle cx="658.4" cy="11.4" r="0.8" fill="#8a7058"/><circle cx="96.9" cy="342.2" r="0.8" fill="#8a7058"/><circle cx="621.5" cy="64.5" r="0.6" fill="#6a625c"/><circle cx="9.4" cy="401.9" r="0.5" fill="#6c6c6c"/><circle cx="496.9" cy="57.6" r="0.6" fill="#5c5a5e"/><circle cx="18.6" cy="88.1" r="0.6" fill="#6c6c6c"/><circle cx="216.1" cy="225.4" r="0.6" fill="#6a625c"/><circle cx="603.3" cy="146.5" r="0.8" fill="#8a7058"/><circle cx="386.8" cy="374.4" r="0.8" fill="#6c6c6c"/><circle cx="86.7" cy="62.9" r="0.5" fill="#54565e"/><circle cx="514.8" cy="251.9" r="0.6" fill="#5c5a5e"/><circle cx="93.9" cy="256.3" r="0.5" fill="#6c6c6c"/><circle cx="40.9" cy="282.5" r="0.8" fill="#6a625c"/><circle cx="585.6" cy="23.5" r="0.6" fill="#7a6450"/><circle cx="28.0" cy="40.5" r="0.8" fill="#6c6c6c"/><circle cx="18.5" cy="370.1" r="0.5" fill="#54565e"/><circle cx="215.9" cy="403.0" r="0.6" fill="#8a7058"/><circle cx="183.8" cy="210.4" r="0.8" fill="#6c6c6c"/><circle cx="624.2" cy="289.5" r="0.7" fill="#6c6c6c"/><circle cx="591.9" cy="83.9" r="0.8" fill="#5c5a5e"/><circle cx="276.2" cy="162.4" r="0.7" fill="#6a625c"/><circle cx="445.0" cy="177.3" r="0.6" fill="#8a7058"/><circle cx="200.7" cy="50.7" r="0.6" fill="#8a7058"/><circle cx="426.6" cy="151.6" r="0.7" fill="#5c5a5e"/><circle cx="641.5" cy="90.9" r="0.5" fill="#54565e"/><circle cx="586.7" cy="67.4" r="0.6" fill="#5c5a5e"/><circle cx="468.3" cy="411.5" r="0.8" fill="#7a6450"/><circle cx="279.3" cy="147.6" r="0.5" fill="#8a7058"/><circle cx="242.6" cy="139.9" r="0.8" fill="#54565e"/><circle cx="466.2" cy="159.1" r="0.7" fill="#6c6c6c"/><circle cx="637.0" cy="46.7" r="0.6" fill="#6a625c"/><circle cx="55.7" cy="112.6" r="0.6" fill="#7a6450"/><circle cx="501.1" cy="339.4" r="0.7" fill="#54565e"/><circle cx="99.0" cy="380.5" r="0.8" fill="#8a7058"/><circle cx="216.8" cy="115.5" r="0.6" fill="#54565e"/><circle cx="593.6" cy="111.3" r="0.5" fill="#8a7058"/><circle cx="58.7" cy="107.9" r="0.6" fill="#6a625c"/><circle cx="175.3" cy="50.4" r="0.5" fill="#7a6450"/><circle cx="659.2" cy="173.0" r="0.7" fill="#6c6c6c"/><circle cx="85.7" cy="218.1" r="0.6" fill="#6a625c"/><circle cx="642.6" cy="108.4" r="0.6" fill="#5c5a5e"/><circle cx="618.1" cy="260.3" r="0.6" fill="#7a6450"/><circle cx="295.5" cy="278.3" r="0.7" fill="#7a6450"/><circle cx="532.8" cy="411.7" r="0.5" fill="#6a625c"/><circle cx="12.2" cy="209.3" r="0.6" fill="#6c6c6c"/><circle cx="314.8" cy="386.9" r="0.5" fill="#8a7058"/><circle cx="542.9" cy="178.9" r="0.8" fill="#6c6c6c"/><circle cx="553.3" cy="162.7" r="0.7" fill="#8a7058"/><circle cx="142.7" cy="95.0" r="0.6" fill="#8a7058"/><circle cx="483.2" cy="57.8" r="0.7" fill="#6a625c"/><circle cx="554.9" cy="5.9" r="0.7" fill="#54565e"/><circle cx="108.2" cy="35.0" r="0.8" fill="#6c6c6c"/><circle cx="444.6" cy="116.7" r="0.6" fill="#8a7058"/><circle cx="194.3" cy="190.2" r="0.6" fill="#7a6450"/><circle cx="295.6" cy="109.0" r="0.7" fill="#6c6c6c"/><circle cx="214.5" cy="14.3" r="0.7" fill="#5c5a5e"/><circle cx="236.4" cy="0.4" r="0.8" fill="#6a625c"/><circle cx="314.7" cy="208.1" r="0.6" fill="#5c5a5e"/><circle cx="334.6" cy="2.0" r="0.7" fill="#6a625c"/><circle cx="95.4" cy="242.9" r="0.8" fill="#6a625c"/><circle cx="198.7" cy="260.7" r="0.5" fill="#6c6c6c"/><circle cx="634.9" cy="353.2" r="0.6" fill="#8a7058"/><circle cx="591.9" cy="324.6" r="0.8" fill="#7a6450"/><circle cx="477.8" cy="204.6" r="0.7" fill="#8a7058"/><circle cx="410.2" cy="59.9" r="0.8" fill="#8a7058"/><circle cx="464.8" cy="209.3" r="0.5" fill="#8a7058"/><circle cx="387.2" cy="369.6" r="0.6" fill="#6a625c"/><circle cx="20.7" cy="55.1" r="0.7" fill="#6a625c"/><circle cx="249.7" cy="186.9" r="0.5" fill="#8a7058"/><circle cx="12.5" cy="220.0" r="0.6" fill="#54565e"/><circle cx="174.9" cy="189.2" r="0.5" fill="#8a7058"/><circle cx="618.3" cy="371.7" r="0.5" fill="#8a7058"/><circle cx="348.7" cy="308.7" r="0.8" fill="#7a6450"/><circle cx="536.5" cy="350.3" r="0.6" fill="#8a7058"/><circle cx="501.5" cy="95.5" r="0.8" fill="#54565e"/><circle cx="560.6" cy="31.8" r="0.7" fill="#6a625c"/><circle cx="409.1" cy="266.1" r="0.5" fill="#6c6c6c"/><circle cx="97.7" cy="105.1" r="0.7" fill="#6c6c6c"/><circle cx="376.4" cy="5.2" r="0.5" fill="#54565e"/><circle cx="178.2" cy="278.2" r="0.6" fill="#8a7058"/><circle cx="324.6" cy="293.5" r="0.7" fill="#54565e"/><circle cx="308.9" cy="317.6" r="0.6" fill="#7a6450"/><circle cx="648.5" cy="387.6" r="0.5" fill="#7a6450"/><circle cx="304.3" cy="339.4" r="0.8" fill="#7a6450"/><circle cx="256.5" cy="379.5" r="0.6" fill="#6a625c"/><circle cx="385.5" cy="58.7" r="0.7" fill="#7a6450"/><circle cx="87.9" cy="339.6" r="0.7" fill="#6a625c"/><circle cx="466.3" cy="95.8" r="0.8" fill="#54565e"/><circle cx="16.5" cy="1.5" r="0.8" fill="#8a7058"/><circle cx="298.9" cy="125.0" r="0.6" fill="#54565e"/><circle cx="228.0" cy="130.9" r="0.7" fill="#6a625c"/><circle cx="215.2" cy="140.0" r="0.8" fill="#6a625c"/><circle cx="623.1" cy="81.0" r="0.5" fill="#8a7058"/><circle cx="192.2" cy="154.1" r="0.8" fill="#54565e"/><circle cx="662.2" cy="243.9" r="0.7" fill="#54565e"/><circle cx="501.0" cy="353.7" r="0.7" fill="#6a625c"/><circle cx="34.2" cy="274.1" r="0.6" fill="#5c5a5e"/><circle cx="643.8" cy="180.6" r="0.7" fill="#5c5a5e"/><circle cx="512.6" cy="325.0" r="0.8" fill="#6a625c"/><circle cx="538.3" cy="261.2" r="0.6" fill="#8a7058"/><circle cx="53.4" cy="386.5" r="0.8" fill="#54565e"/><circle cx="407.7" cy="57.4" r="0.7" fill="#54565e"/><circle cx="32.5" cy="383.7" r="0.6" fill="#5c5a5e"/><circle cx="313.1" cy="142.3" r="0.7" fill="#7a6450"/><circle cx="490.0" cy="404.2" r="0.7" fill="#54565e"/><circle cx="434.9" cy="124.5" r="0.8" fill="#6a625c"/><circle cx="110.9" cy="66.9" r="0.6" fill="#6c6c6c"/><circle cx="600.7" cy="205.8" r="0.6" fill="#54565e"/><circle cx="600.8" cy="412.5" r="0.8" fill="#54565e"/><circle cx="92.6" cy="79.7" r="0.5" fill="#5c5a5e"/><circle cx="226.7" cy="37.7" r="0.6" fill="#7a6450"/><circle cx="171.3" cy="235.8" r="0.5" fill="#8a7058"/><circle cx="577.2" cy="158.5" r="0.6" fill="#54565e"/><circle cx="179.2" cy="311.4" r="0.8" fill="#7a6450"/><circle cx="380.7" cy="149.1" r="0.6" fill="#6a625c"/><circle cx="179.7" cy="102.9" r="0.8" fill="#8a7058"/><circle cx="295.6" cy="394.9" r="0.5" fill="#5c5a5e"/><circle cx="21.4" cy="293.7" r="0.8" fill="#6c6c6c"/><circle cx="324.8" cy="30.3" r="0.8" fill="#54565e"/><circle cx="164.7" cy="45.1" r="0.6" fill="#5c5a5e"/><circle cx="346.3" cy="282.4" r="0.8" fill="#6a625c"/><circle cx="365.6" cy="16.4" r="0.6" fill="#5c5a5e"/><circle cx="377.5" cy="15.6" r="0.7" fill="#5c5a5e"/><circle cx="415.4" cy="218.7" r="0.8" fill="#8a7058"/><circle cx="506.4" cy="41.2" r="0.7" fill="#6c6c6c"/><circle cx="625.6" cy="79.4" r="0.7" fill="#5c5a5e"/><circle cx="524.1" cy="0.5" r="0.7" fill="#54565e"/><circle cx="184.7" cy="131.0" r="0.6" fill="#54565e"/><circle cx="348.9" cy="226.5" r="0.5" fill="#54565e"/><circle cx="467.2" cy="127.3" r="0.5" fill="#5c5a5e"/><circle cx="330.4" cy="279.2" r="0.8" fill="#6a625c"/><circle cx="170.6" cy="276.3" r="0.7" fill="#5c5a5e"/><circle cx="326.8" cy="288.1" r="0.8" fill="#7a6450"/><circle cx="452.5" cy="82.0" r="0.7" fill="#8a7058"/><circle cx="560.3" cy="27.9" r="0.8" fill="#5c5a5e"/><circle cx="206.7" cy="339.5" r="0.6" fill="#54565e"/><circle cx="146.8" cy="314.8" r="0.7" fill="#6a625c"/><circle cx="631.1" cy="205.2" r="0.6" fill="#5c5a5e"/><circle cx="321.6" cy="376.9" r="0.5" fill="#6c6c6c"/><circle cx="97.1" cy="162.9" r="0.6" fill="#6a625c"/><circle cx="645.8" cy="58.8" r="0.5" fill="#8a7058"/><circle cx="39.9" cy="162.8" r="0.7" fill="#8a7058"/><circle cx="75.1" cy="32.9" r="0.6" fill="#7a6450"/><circle cx="126.4" cy="270.1" r="0.8" fill="#6a625c"/><circle cx="206.7" cy="300.3" r="0.7" fill="#7a6450"/><circle cx="293.3" cy="45.1" r="0.5" fill="#7a6450"/><circle cx="53.5" cy="174.0" r="0.5" fill="#6c6c6c"/><circle cx="639.3" cy="85.9" r="0.7" fill="#7a6450"/><circle cx="545.0" cy="179.0" r="0.5" fill="#8a7058"/><circle cx="313.9" cy="154.3" r="0.8" fill="#5c5a5e"/><circle cx="214.4" cy="305.3" r="0.8" fill="#6a625c"/><circle cx="418.8" cy="102.7" r="0.8" fill="#6a625c"/><circle cx="249.0" cy="192.1" r="0.5" fill="#7a6450"/><circle cx="129.2" cy="26.0" r="0.7" fill="#7a6450"/><circle cx="180.5" cy="396.5" r="0.5" fill="#7a6450"/><circle cx="494.9" cy="285.5" r="0.7" fill="#7a6450"/><circle cx="2.5" cy="312.8" r="0.5" fill="#6a625c"/><circle cx="547.7" cy="44.4" r="0.8" fill="#54565e"/><circle cx="523.6" cy="378.2" r="0.8" fill="#5c5a5e"/><circle cx="615.3" cy="75.7" r="0.7" fill="#8a7058"/><circle cx="512.4" cy="251.4" r="0.7" fill="#7a6450"/><circle cx="305.5" cy="324.5" r="0.5" fill="#6c6c6c"/><circle cx="130.8" cy="311.7" r="0.6" fill="#54565e"/><circle cx="42.9" cy="14.0" r="0.7" fill="#5c5a5e"/><circle cx="649.9" cy="365.8" r="0.5" fill="#7a6450"/><circle cx="414.1" cy="86.3" r="0.8" fill="#54565e"/><circle cx="655.3" cy="402.5" r="0.6" fill="#5c5a5e"/><circle cx="88.1" cy="190.8" r="0.6" fill="#8a7058"/><circle cx="357.1" cy="320.4" r="0.5" fill="#7a6450"/><circle cx="194.8" cy="234.7" r="0.7" fill="#7a6450"/><circle cx="489.3" cy="82.5" r="0.6" fill="#5c5a5e"/><circle cx="162.7" cy="63.5" r="0.6" fill="#7a6450"/><circle cx="43.0" cy="104.2" r="0.6" fill="#6c6c6c"/><circle cx="348.9" cy="269.0" r="0.5" fill="#8a7058"/><circle cx="307.6" cy="15.3" r="0.5" fill="#54565e"/><circle cx="585.3" cy="95.7" r="0.8" fill="#7a6450"/><circle cx="26.8" cy="121.6" r="0.5" fill="#6a625c"/><circle cx="125.7" cy="402.8" r="0.6" fill="#6a625c"/><circle cx="246.8" cy="358.6" r="0.8" fill="#6c6c6c"/><circle cx="172.3" cy="322.0" r="0.5" fill="#6a625c"/><circle cx="422.6" cy="293.8" r="0.7" fill="#5c5a5e"/><circle cx="24.8" cy="140.8" r="0.5" fill="#5c5a5e"/><circle cx="662.9" cy="15.8" r="0.6" fill="#6a625c"/><circle cx="542.9" cy="169.3" r="0.7" fill="#5c5a5e"/><circle cx="411.7" cy="32.3" r="0.5" fill="#54565e"/><circle cx="363.4" cy="26.2" r="0.5" fill="#54565e"/><circle cx="440.2" cy="64.0" r="0.5" fill="#8a7058"/><circle cx="108.5" cy="287.9" r="0.8" fill="#7a6450"/><circle cx="442.8" cy="173.0" r="0.5" fill="#7a6450"/><circle cx="494.2" cy="365.8" r="0.8" fill="#54565e"/><circle cx="12.1" cy="317.4" r="0.7" fill="#8a7058"/><circle cx="130.7" cy="301.4" r="0.6" fill="#6a625c"/><circle cx="287.9" cy="64.8" r="0.5" fill="#6a625c"/><circle cx="269.3" cy="365.5" r="0.8" fill="#5c5a5e"/><circle cx="86.2" cy="21.4" r="0.6" fill="#8a7058"/><circle cx="534.7" cy="164.2" r="0.7" fill="#8a7058"/><circle cx="334.5" cy="60.4" r="0.7" fill="#5c5a5e"/><circle cx="345.5" cy="383.2" r="0.5" fill="#54565e"/><circle cx="325.2" cy="333.2" r="0.6" fill="#7a6450"/><circle cx="84.0" cy="390.4" r="0.8" fill="#7a6450"/><circle cx="35.4" cy="383.4" r="0.8" fill="#6a625c"/><circle cx="599.5" cy="256.8" r="0.6" fill="#8a7058"/><circle cx="521.0" cy="91.9" r="0.8" fill="#6c6c6c"/><circle cx="561.1" cy="343.3" r="0.6" fill="#6c6c6c"/><circle cx="144.6" cy="165.5" r="0.6" fill="#54565e"/><circle cx="238.2" cy="61.9" r="0.6" fill="#6a625c"/><circle cx="586.0" cy="348.8" r="0.5" fill="#8a7058"/><circle cx="555.7" cy="48.7" r="0.8" fill="#6c6c6c"/><circle cx="562.9" cy="322.1" r="0.8" fill="#7a6450"/><circle cx="386.3" cy="176.3" r="0.7" fill="#54565e"/><circle cx="333.9" cy="74.0" r="0.5" fill="#6c6c6c"/><circle cx="653.8" cy="192.6" r="0.8" fill="#6c6c6c"/><circle cx="517.1" cy="189.7" r="0.6" fill="#54565e"/><circle cx="265.4" cy="27.8" r="0.7" fill="#54565e"/><circle cx="242.2" cy="332.1" r="0.5" fill="#6a625c"/><circle cx="422.0" cy="34.0" r="0.7" fill="#8a7058"/><circle cx="339.1" cy="22.5" r="0.8" fill="#8a7058"/><circle cx="630.4" cy="56.4" r="0.5" fill="#6c6c6c"/><circle cx="485.4" cy="337.4" r="0.6" fill="#5c5a5e"/><circle cx="650.9" cy="203.6" r="0.6" fill="#8a7058"/><circle cx="522.7" cy="385.3" r="0.5" fill="#7a6450"/><circle cx="404.7" cy="104.4" r="0.7" fill="#6c6c6c"/><circle cx="182.3" cy="337.7" r="0.6" fill="#7a6450"/><circle cx="333.0" cy="380.8" r="0.6" fill="#6c6c6c"/><circle cx="174.3" cy="209.5" r="0.7" fill="#7a6450"/><circle cx="24.4" cy="75.4" r="0.6" fill="#8a7058"/><circle cx="620.8" cy="281.4" r="0.8" fill="#5c5a5e"/><circle cx="525.2" cy="109.4" r="0.5" fill="#8a7058"/><circle cx="569.0" cy="400.0" r="0.8" fill="#6c6c6c"/><circle cx="345.7" cy="285.1" r="0.5" fill="#7a6450"/><circle cx="658.3" cy="260.7" r="0.8" fill="#8a7058"/><circle cx="528.9" cy="109.6" r="0.7" fill="#6c6c6c"/><circle cx="96.9" cy="137.0" r="0.5" fill="#54565e"/><circle cx="152.5" cy="254.8" r="0.5" fill="#7a6450"/><circle cx="543.5" cy="105.0" r="0.7" fill="#8a7058"/><circle cx="1.2" cy="14.0" r="0.6" fill="#7a6450"/><circle cx="408.4" cy="178.9" r="0.7" fill="#6a625c"/><circle cx="87.5" cy="94.1" r="0.5" fill="#6a625c"/><circle cx="36.1" cy="234.8" r="0.7" fill="#6a625c"/><circle cx="346.8" cy="221.1" r="0.8" fill="#6c6c6c"/><circle cx="199.7" cy="55.4" r="0.7" fill="#6c6c6c"/><circle cx="549.3" cy="65.7" r="0.5" fill="#5c5a5e"/><circle cx="469.1" cy="186.7" r="0.5" fill="#8a7058"/><circle cx="95.9" cy="275.5" r="0.7" fill="#54565e"/><circle cx="538.1" cy="400.4" r="0.5" fill="#8a7058"/><circle cx="544.2" cy="369.6" r="0.8" fill="#6c6c6c"/><circle cx="621.3" cy="303.7" r="0.6" fill="#5c5a5e"/><circle cx="599.0" cy="18.2" r="0.5" fill="#54565e"/><circle cx="123.1" cy="65.9" r="0.5" fill="#6a625c"/><circle cx="406.2" cy="271.9" r="0.6" fill="#5c5a5e"/><circle cx="273.9" cy="214.6" r="0.8" fill="#6c6c6c"/><circle cx="115.8" cy="128.1" r="0.7" fill="#8a7058"/><circle cx="32.1" cy="368.2" r="0.8" fill="#8a7058"/><circle cx="357.0" cy="155.3" r="0.8" fill="#8a7058"/><circle cx="604.8" cy="33.3" r="0.8" fill="#5c5a5e"/><circle cx="149.8" cy="43.6" r="0.6" fill="#8a7058"/><circle cx="25.7" cy="138.9" r="0.7" fill="#8a7058"/><circle cx="34.8" cy="263.2" r="0.8" fill="#8a7058"/><circle cx="522.7" cy="216.6" r="0.7" fill="#7a6450"/><circle cx="425.6" cy="399.6" r="0.6" fill="#6a625c"/><circle cx="583.5" cy="6.3" r="0.7" fill="#5c5a5e"/><circle cx="558.1" cy="83.9" r="0.6" fill="#8a7058"/><circle cx="606.6" cy="79.5" r="0.8" fill="#7a6450"/><circle cx="398.6" cy="157.1" r="0.8" fill="#54565e"/><circle cx="556.7" cy="288.8" r="0.5" fill="#54565e"/><circle cx="633.6" cy="96.8" r="0.7" fill="#5c5a5e"/><circle cx="259.6" cy="242.3" r="0.6" fill="#5c5a5e"/><circle cx="21.8" cy="46.3" r="0.6" fill="#7a6450"/><circle cx="648.0" cy="290.1" r="0.5" fill="#6a625c"/><circle cx="91.8" cy="266.4" r="0.5" fill="#8a7058"/><circle cx="45.0" cy="19.3" r="0.7" fill="#5c5a5e"/><circle cx="542.0" cy="339.3" r="0.5" fill="#8a7058"/><circle cx="626.1" cy="44.3" r="0.6" fill="#5c5a5e"/><circle cx="74.2" cy="14.3" r="0.5" fill="#8a7058"/><circle cx="419.2" cy="197.5" r="0.6" fill="#6a625c"/><circle cx="525.1" cy="267.6" r="0.7" fill="#7a6450"/><circle cx="223.1" cy="108.1" r="0.7" fill="#7a6450"/><circle cx="616.7" cy="20.0" r="0.7" fill="#7a6450"/><circle cx="510.0" cy="249.2" r="0.8" fill="#7a6450"/><circle cx="409.9" cy="12.8" r="0.8" fill="#6a625c"/><circle cx="289.4" cy="320.0" r="0.7" fill="#54565e"/><circle cx="467.2" cy="222.7" r="0.6" fill="#8a7058"/><circle cx="571.7" cy="37.6" r="0.7" fill="#5c5a5e"/><circle cx="289.1" cy="216.8" r="0.7" fill="#6a625c"/><circle cx="2.9" cy="203.2" r="0.8" fill="#8a7058"/><circle cx="528.3" cy="76.4" r="0.8" fill="#6c6c6c"/><circle cx="230.2" cy="344.4" r="0.7" fill="#6c6c6c"/><circle cx="625.8" cy="117.5" r="0.6" fill="#8a7058"/><circle cx="153.5" cy="68.6" r="0.5" fill="#54565e"/><circle cx="522.4" cy="288.6" r="0.5" fill="#8a7058"/><circle cx="216.6" cy="39.4" r="0.8" fill="#8a7058"/><circle cx="57.1" cy="367.8" r="0.5" fill="#7a6450"/><circle cx="136.7" cy="109.0" r="0.6" fill="#54565e"/><circle cx="651.3" cy="261.1" r="0.8" fill="#5c5a5e"/><circle cx="352.4" cy="312.4" r="0.5" fill="#7a6450"/><circle cx="385.6" cy="216.0" r="0.8" fill="#8a7058"/><circle cx="367.1" cy="133.9" r="0.8" fill="#54565e"/><circle cx="456.8" cy="106.5" r="0.6" fill="#5c5a5e"/><circle cx="221.5" cy="266.1" r="0.6" fill="#6c6c6c"/><circle cx="127.0" cy="124.8" r="0.6" fill="#8a7058"/><circle cx="103.4" cy="102.5" r="0.7" fill="#6c6c6c"/><circle cx="346.2" cy="66.6" r="0.7" fill="#5c5a5e"/><circle cx="171.5" cy="395.4" r="0.5" fill="#5c5a5e"/><circle cx="638.1" cy="42.1" r="0.8" fill="#5c5a5e"/><circle cx="652.3" cy="329.1" r="0.7" fill="#54565e"/><circle cx="181.5" cy="45.2" r="0.5" fill="#7a6450"/><circle cx="136.9" cy="160.8" r="0.5" fill="#6a625c"/><circle cx="264.6" cy="327.5" r="0.6" fill="#6c6c6c"/><circle cx="650.3" cy="122.6" r="0.5" fill="#5c5a5e"/><circle cx="170.5" cy="305.6" r="0.5" fill="#8a7058"/><circle cx="160.6" cy="353.1" r="0.8" fill="#5c5a5e"/><circle cx="442.8" cy="270.1" r="0.6" fill="#8a7058"/><circle cx="120.3" cy="51.4" r="0.8" fill="#7a6450"/><circle cx="172.3" cy="290.1" r="0.8" fill="#5c5a5e"/><circle cx="518.7" cy="295.2" r="0.6" fill="#7a6450"/><circle cx="563.2" cy="199.9" r="0.5" fill="#6c6c6c"/><circle cx="569.2" cy="214.6" r="0.6" fill="#8a7058"/><circle cx="217.5" cy="4.4" r="0.8" fill="#6a625c"/><circle cx="25.3" cy="225.0" r="0.6" fill="#8a7058"/><circle cx="518.3" cy="389.4" r="0.7" fill="#6a625c"/><circle cx="561.7" cy="189.1" r="0.6" fill="#8a7058"/><circle cx="315.4" cy="6.7" r="0.7" fill="#6c6c6c"/><circle cx="227.3" cy="307.2" r="0.8" fill="#5c5a5e"/><circle cx="656.6" cy="76.1" r="0.5" fill="#8a7058"/><circle cx="652.7" cy="147.2" r="0.5" fill="#7a6450"/><circle cx="181.9" cy="165.5" r="0.5" fill="#6a625c"/><circle cx="277.5" cy="174.1" r="0.7" fill="#6c6c6c"/><circle cx="175.8" cy="92.9" r="0.8" fill="#6c6c6c"/><circle cx="644.1" cy="411.6" r="0.8" fill="#54565e"/><circle cx="140.6" cy="53.5" r="0.5" fill="#8a7058"/><circle cx="128.1" cy="265.9" r="0.6" fill="#5c5a5e"/><circle cx="234.1" cy="264.5" r="0.8" fill="#54565e"/><circle cx="660.4" cy="314.6" r="0.6" fill="#54565e"/><circle cx="235.2" cy="352.2" r="0.7" fill="#8a7058"/><circle cx="249.4" cy="105.0" r="0.8" fill="#8a7058"/><circle cx="123.2" cy="1.1" r="0.7" fill="#7a6450"/><circle cx="162.4" cy="125.0" r="0.8" fill="#54565e"/><circle cx="284.1" cy="263.8" r="0.7" fill="#5c5a5e"/><circle cx="615.7" cy="353.7" r="0.5" fill="#6a625c"/><circle cx="548.9" cy="375.0" r="0.6" fill="#6c6c6c"/><circle cx="551.2" cy="262.1" r="0.5" fill="#8a7058"/><circle cx="7.6" cy="394.0" r="0.7" fill="#7a6450"/><circle cx="403.2" cy="239.5" r="0.6" fill="#5c5a5e"/><circle cx="514.7" cy="143.4" r="0.6" fill="#5c5a5e"/><circle cx="599.4" cy="327.8" r="0.6" fill="#6c6c6c"/><circle cx="590.8" cy="251.9" r="0.5" fill="#8a7058"/><circle cx="597.8" cy="227.1" r="0.7" fill="#5c5a5e"/><circle cx="327.8" cy="88.2" r="0.5" fill="#8a7058"/><circle cx="556.4" cy="277.9" r="0.5" fill="#6c6c6c"/><circle cx="78.5" cy="173.5" r="0.6" fill="#54565e"/><circle cx="326.9" cy="24.2" r="0.8" fill="#5c5a5e"/><circle cx="464.4" cy="102.1" r="0.6" fill="#6c6c6c"/><circle cx="397.5" cy="304.1" r="0.6" fill="#7a6450"/><circle cx="310.3" cy="232.9" r="0.7" fill="#54565e"/><circle cx="248.6" cy="173.4" r="0.5" fill="#5c5a5e"/><circle cx="422.4" cy="263.4" r="0.5" fill="#6a625c"/><circle cx="404.2" cy="282.6" r="0.7" fill="#6a625c"/><circle cx="338.5" cy="200.7" r="0.6" fill="#6a625c"/><circle cx="141.5" cy="172.1" r="0.6" fill="#7a6450"/><circle cx="62.6" cy="272.8" r="0.7" fill="#54565e"/><circle cx="516.2" cy="229.4" r="0.6" fill="#7a6450"/><circle cx="288.5" cy="174.9" r="0.5" fill="#7a6450"/><circle cx="194.2" cy="342.7" r="0.8" fill="#7a6450"/><circle cx="334.0" cy="112.5" r="0.7" fill="#5c5a5e"/><circle cx="434.0" cy="327.9" r="0.7" fill="#5c5a5e"/><circle cx="210.2" cy="123.9" r="0.5" fill="#6a625c"/><circle cx="264.5" cy="229.5" r="0.8" fill="#6c6c6c"/><circle cx="380.6" cy="165.0" r="0.5" fill="#6a625c"/><circle cx="30.8" cy="340.3" r="0.8" fill="#6c6c6c"/><circle cx="507.8" cy="24.9" r="0.8" fill="#6c6c6c"/><circle cx="97.5" cy="278.9" r="0.5" fill="#5c5a5e"/><circle cx="26.2" cy="262.3" r="0.6" fill="#6a625c"/><circle cx="440.0" cy="359.9" r="0.8" fill="#6a625c"/><circle cx="606.0" cy="271.5" r="0.7" fill="#5c5a5e"/><circle cx="521.5" cy="232.7" r="0.7" fill="#7a6450"/><circle cx="122.5" cy="14.2" r="0.5" fill="#54565e"/><circle cx="375.5" cy="239.4" r="0.5" fill="#54565e"/><circle cx="376.3" cy="16.3" r="0.5" fill="#54565e"/><circle cx="381.4" cy="380.3" r="0.8" fill="#6a625c"/><circle cx="9.4" cy="160.3" r="0.6" fill="#54565e"/><circle cx="510.4" cy="227.2" r="0.5" fill="#8a7058"/><circle cx="313.1" cy="370.8" r="0.5" fill="#54565e"/><circle cx="3.2" cy="283.1" r="0.5" fill="#6a625c"/><circle cx="144.7" cy="50.2" r="0.8" fill="#6a625c"/><circle cx="182.6" cy="235.6" r="0.8" fill="#8a7058"/><circle cx="493.4" cy="382.0" r="0.7" fill="#8a7058"/><circle cx="473.1" cy="354.2" r="0.5" fill="#7a6450"/><circle cx="416.8" cy="293.6" r="0.8" fill="#8a7058"/><circle cx="618.1" cy="105.2" r="0.5" fill="#8a7058"/><circle cx="21.2" cy="25.1" r="0.5" fill="#54565e"/><circle cx="206.2" cy="302.0" r="0.6" fill="#54565e"/><circle cx="403.7" cy="130.9" r="0.8" fill="#54565e"/><circle cx="448.8" cy="60.0" r="0.5" fill="#7a6450"/><circle cx="632.4" cy="67.9" r="0.8" fill="#54565e"/><circle cx="255.7" cy="325.5" r="0.7" fill="#6c6c6c"/><circle cx="221.4" cy="115.9" r="0.7" fill="#6c6c6c"/><circle cx="481.1" cy="6.4" r="0.6" fill="#6c6c6c"/><circle cx="552.0" cy="242.1" r="0.6" fill="#54565e"/><circle cx="256.8" cy="155.7" r="0.6" fill="#54565e"/><circle cx="187.8" cy="0.7" r="0.7" fill="#7a6450"/><circle cx="280.1" cy="242.9" r="0.5" fill="#7a6450"/><circle cx="552.4" cy="336.1" r="0.6" fill="#7a6450"/><circle cx="646.7" cy="330.1" r="0.8" fill="#7a6450"/><circle cx="354.4" cy="223.6" r="0.8" fill="#54565e"/><circle cx="132.9" cy="310.6" r="0.6" fill="#7a6450"/><circle cx="402.4" cy="280.6" r="0.8" fill="#8a7058"/><circle cx="137.0" cy="105.5" r="0.5" fill="#54565e"/><circle cx="304.8" cy="36.3" r="0.7" fill="#6a625c"/><circle cx="154.4" cy="240.0" r="0.7" fill="#6c6c6c"/><circle cx="212.8" cy="209.6" r="0.6" fill="#5c5a5e"/><circle cx="141.0" cy="38.2" r="0.7" fill="#7a6450"/><circle cx="383.1" cy="148.6" r="0.6" fill="#5c5a5e"/><circle cx="29.6" cy="412.8" r="0.7" fill="#6a625c"/><circle cx="246.4" cy="191.9" r="0.5" fill="#5c5a5e"/><circle cx="209.4" cy="12.6" r="0.7" fill="#6c6c6c"/><circle cx="402.5" cy="39.0" r="0.6" fill="#6c6c6c"/><circle cx="322.4" cy="234.8" r="0.7" fill="#7a6450"/><circle cx="282.4" cy="391.9" r="0.6" fill="#7a6450"/><circle cx="559.4" cy="140.3" r="0.6" fill="#54565e"/><circle cx="55.5" cy="21.1" r="0.7" fill="#8a7058"/><circle cx="303.8" cy="392.1" r="0.5" fill="#6c6c6c"/><circle cx="424.2" cy="381.8" r="0.5" fill="#7a6450"/><circle cx="211.3" cy="96.5" r="0.5" fill="#8a7058"/><circle cx="335.8" cy="75.6" r="0.6" fill="#7a6450"/><circle cx="640.3" cy="410.6" r="0.6" fill="#5c5a5e"/><circle cx="25.6" cy="105.9" r="0.7" fill="#6a625c"/><circle cx="598.5" cy="374.5" r="0.5" fill="#7a6450"/><circle cx="521.4" cy="293.8" r="0.8" fill="#6a625c"/><circle cx="67.0" cy="131.5" r="0.5" fill="#5c5a5e"/><circle cx="448.8" cy="123.7" r="0.8" fill="#8a7058"/><circle cx="69.9" cy="134.1" r="0.7" fill="#54565e"/><circle cx="82.3" cy="199.3" r="0.6" fill="#54565e"/><circle cx="158.1" cy="59.3" r="0.5" fill="#54565e"/><circle cx="475.5" cy="80.8" r="0.5" fill="#5c5a5e"/><circle cx="615.1" cy="91.3" r="0.7" fill="#8a7058"/><circle cx="92.7" cy="185.2" r="0.5" fill="#54565e"/><circle cx="558.4" cy="260.1" r="0.8" fill="#7a6450"/><circle cx="213.9" cy="96.8" r="0.5" fill="#8a7058"/><circle cx="242.7" cy="137.4" r="0.5" fill="#5c5a5e"/><circle cx="473.2" cy="229.1" r="0.6" fill="#54565e"/><circle cx="577.3" cy="110.3" r="0.8" fill="#5c5a5e"/><circle cx="103.2" cy="112.2" r="0.7" fill="#7a6450"/><circle cx="533.1" cy="107.9" r="0.5" fill="#7a6450"/><circle cx="302.5" cy="199.7" r="0.6" fill="#6c6c6c"/><circle cx="37.7" cy="370.5" r="0.6" fill="#6c6c6c"/><circle cx="316.6" cy="118.5" r="0.7" fill="#5c5a5e"/><circle cx="643.6" cy="178.9" r="0.7" fill="#5c5a5e"/><circle cx="613.3" cy="40.4" r="0.7" fill="#54565e"/><circle cx="594.2" cy="23.8" r="0.7" fill="#5c5a5e"/><circle cx="648.8" cy="6.6" r="0.7" fill="#6c6c6c"/><circle cx="92.9" cy="0.8" r="0.7" fill="#5c5a5e"/><circle cx="238.7" cy="16.8" r="0.8" fill="#5c5a5e"/><circle cx="183.5" cy="74.8" r="0.6" fill="#6c6c6c"/><circle cx="510.8" cy="294.6" r="0.6" fill="#6c6c6c"/><circle cx="52.6" cy="36.2" r="0.8" fill="#7a6450"/><circle cx="116.2" cy="56.7" r="0.6" fill="#6c6c6c"/><circle cx="204.2" cy="4.2" r="0.8" fill="#8a7058"/><circle cx="607.5" cy="214.6" r="0.7" fill="#7a6450"/><circle cx="186.8" cy="264.6" r="0.8" fill="#6a625c"/><circle cx="10.2" cy="376.8" r="0.8" fill="#5c5a5e"/><circle cx="578.1" cy="110.2" r="0.6" fill="#6c6c6c"/><circle cx="551.4" cy="152.0" r="0.6" fill="#8a7058"/><circle cx="246.1" cy="246.3" r="0.5" fill="#7a6450"/><circle cx="344.6" cy="184.5" r="0.5" fill="#6a625c"/><circle cx="236.5" cy="101.3" r="0.7" fill="#8a7058"/><circle cx="575.5" cy="238.6" r="0.5" fill="#7a6450"/><circle cx="578.7" cy="395.0" r="0.8" fill="#54565e"/><circle cx="340.3" cy="219.6" r="0.6" fill="#6a625c"/><circle cx="161.5" cy="36.7" r="0.6" fill="#5c5a5e"/><circle cx="68.1" cy="103.7" r="0.5" fill="#6a625c"/><circle cx="64.0" cy="289.4" r="0.6" fill="#7a6450"/><circle cx="11.7" cy="248.2" r="0.8" fill="#6c6c6c"/><circle cx="158.0" cy="183.9" r="0.7" fill="#6a625c"/><circle cx="475.4" cy="18.7" r="0.5" fill="#54565e"/><circle cx="327.3" cy="207.3" r="0.7" fill="#6a625c"/><circle cx="80.9" cy="167.9" r="0.6" fill="#6c6c6c"/><circle cx="392.4" cy="356.5" r="0.6" fill="#8a7058"/><circle cx="379.8" cy="309.1" r="0.6" fill="#6a625c"/><circle cx="621.6" cy="160.9" r="0.8" fill="#6c6c6c"/><circle cx="556.7" cy="217.6" r="0.8" fill="#6a625c"/><circle cx="515.1" cy="140.2" r="0.6" fill="#7a6450"/><circle cx="474.4" cy="349.0" r="0.7" fill="#54565e"/><circle cx="562.0" cy="22.2" r="0.6" fill="#8a7058"/><circle cx="619.5" cy="103.2" r="0.8" fill="#8a7058"/><circle cx="419.5" cy="150.9" r="0.6" fill="#6a625c"/><circle cx="215.0" cy="83.1" r="0.5" fill="#5c5a5e"/><circle cx="92.4" cy="401.5" r="0.8" fill="#8a7058"/><circle cx="31.0" cy="405.8" r="0.5" fill="#6a625c"/><circle cx="573.9" cy="257.1" r="0.7" fill="#8a7058"/><circle cx="359.5" cy="382.7" r="0.5" fill="#7a6450"/><circle cx="80.7" cy="5.7" r="0.6" fill="#6a625c"/><circle cx="190.6" cy="126.4" r="0.6" fill="#6a625c"/><circle cx="40.0" cy="397.1" r="0.7" fill="#6a625c"/><circle cx="309.2" cy="221.0" r="0.6" fill="#54565e"/><circle cx="82.2" cy="54.4" r="0.7" fill="#54565e"/><circle cx="382.8" cy="113.5" r="0.5" fill="#8a7058"/><circle cx="362.2" cy="347.7" r="0.6" fill="#8a7058"/><circle cx="256.3" cy="227.1" r="0.7" fill="#54565e"/><circle cx="591.3" cy="125.7" r="0.8" fill="#54565e"/><circle cx="542.9" cy="12.8" r="0.7" fill="#5c5a5e"/><circle cx="125.2" cy="226.0" r="0.8" fill="#6a625c"/><circle cx="612.7" cy="67.2" r="0.6" fill="#7a6450"/><circle cx="369.1" cy="203.4" r="0.7" fill="#5c5a5e"/><circle cx="195.9" cy="319.7" r="0.6" fill="#6c6c6c"/><circle cx="44.3" cy="360.7" r="0.8" fill="#8a7058"/><circle cx="41.1" cy="160.6" r="0.8" fill="#7a6450"/><circle cx="487.6" cy="45.2" r="0.6" fill="#8a7058"/><circle cx="489.7" cy="64.0" r="0.7" fill="#8a7058"/><circle cx="233.7" cy="279.6" r="0.7" fill="#6c6c6c"/><circle cx="63.0" cy="354.5" r="0.8" fill="#7a6450"/><circle cx="520.4" cy="293.3" r="0.6" fill="#54565e"/><circle cx="577.4" cy="1.8" r="0.5" fill="#54565e"/><circle cx="263.5" cy="411.1" r="0.6" fill="#54565e"/><circle cx="563.5" cy="115.6" r="0.5" fill="#54565e"/><circle cx="564.7" cy="286.8" r="0.7" fill="#8a7058"/><circle cx="233.8" cy="146.1" r="0.8" fill="#8a7058"/><circle cx="213.5" cy="325.9" r="0.8" fill="#54565e"/><circle cx="294.4" cy="76.3" r="0.7" fill="#5c5a5e"/><circle cx="288.8" cy="156.1" r="0.6" fill="#6a625c"/><circle cx="544.7" cy="136.7" r="0.6" fill="#7a6450"/><circle cx="135.5" cy="176.5" r="0.5" fill="#6a625c"/><circle cx="31.5" cy="233.9" r="0.8" fill="#7a6450"/><circle cx="610.2" cy="320.2" r="0.8" fill="#6c6c6c"/><circle cx="547.4" cy="301.0" r="0.8" fill="#54565e"/><circle cx="307.8" cy="16.9" r="0.7" fill="#54565e"/><circle cx="628.5" cy="280.1" r="0.6" fill="#6a625c"/><circle cx="271.5" cy="207.4" r="0.6" fill="#5c5a5e"/><circle cx="639.4" cy="201.5" r="0.8" fill="#6c6c6c"/><circle cx="596.1" cy="243.2" r="0.5" fill="#5c5a5e"/><circle cx="240.5" cy="151.8" r="0.5" fill="#7a6450"/><circle cx="339.8" cy="45.8" r="0.7" fill="#8a7058"/><circle cx="227.6" cy="387.3" r="0.8" fill="#8a7058"/><circle cx="103.7" cy="120.0" r="0.6" fill="#6c6c6c"/><circle cx="592.2" cy="170.7" r="0.5" fill="#8a7058"/><circle cx="374.6" cy="44.1" r="0.5" fill="#8a7058"/><circle cx="272.8" cy="326.1" r="0.7" fill="#8a7058"/><circle cx="457.9" cy="1.6" r="0.7" fill="#54565e"/><circle cx="558.4" cy="242.7" r="0.5" fill="#5c5a5e"/><circle cx="116.2" cy="318.4" r="0.7" fill="#8a7058"/><circle cx="593.8" cy="212.9" r="0.6" fill="#6c6c6c"/><circle cx="131.6" cy="249.1" r="0.6" fill="#5c5a5e"/><circle cx="343.7" cy="210.9" r="0.5" fill="#6a625c"/><circle cx="50.5" cy="392.4" r="0.8" fill="#54565e"/><circle cx="406.4" cy="333.9" r="0.5" fill="#8a7058"/><circle cx="8.3" cy="319.0" r="0.7" fill="#5c5a5e"/><circle cx="474.3" cy="146.5" r="0.6" fill="#6a625c"/><circle cx="176.8" cy="41.2" r="0.5" fill="#7a6450"/><circle cx="127.1" cy="258.3" r="0.5" fill="#6a625c"/><circle cx="145.9" cy="163.9" r="0.5" fill="#54565e"/><circle cx="36.2" cy="98.7" r="0.6" fill="#6a625c"/><circle cx="105.7" cy="243.0" r="0.6" fill="#7a6450"/><circle cx="4.1" cy="358.9" r="0.8" fill="#7a6450"/><circle cx="277.4" cy="104.3" r="0.8" fill="#6a625c"/><circle cx="161.1" cy="161.4" r="0.6" fill="#54565e"/><circle cx="205.0" cy="362.4" r="0.8" fill="#6a625c"/><circle cx="525.6" cy="100.8" r="0.6" fill="#5c5a5e"/><circle cx="237.6" cy="77.2" r="0.7" fill="#54565e"/><circle cx="372.3" cy="47.6" r="0.8" fill="#7a6450"/><circle cx="267.3" cy="27.1" r="0.5" fill="#54565e"/><circle cx="547.5" cy="145.4" r="0.6" fill="#54565e"/><circle cx="126.8" cy="117.4" r="0.6" fill="#54565e"/><circle cx="23.1" cy="275.0" r="0.7" fill="#5c5a5e"/><circle cx="160.3" cy="53.8" r="0.6" fill="#7a6450"/><circle cx="361.2" cy="326.0" r="0.8" fill="#54565e"/><circle cx="554.5" cy="333.2" r="0.6" fill="#7a6450"/><circle cx="234.0" cy="299.1" r="0.8" fill="#8a7058"/><circle cx="635.4" cy="86.1" r="0.8" fill="#6c6c6c"/><circle cx="135.5" cy="355.4" r="0.6" fill="#8a7058"/><circle cx="661.6" cy="246.7" r="0.8" fill="#6c6c6c"/><circle cx="656.4" cy="221.3" r="0.8" fill="#6c6c6c"/><circle cx="338.3" cy="52.0" r="0.5" fill="#8a7058"/><circle cx="340.1" cy="224.6" r="0.7" fill="#8a7058"/><circle cx="511.7" cy="159.3" r="0.6" fill="#7a6450"/><circle cx="9.9" cy="294.2" r="0.6" fill="#5c5a5e"/><circle cx="212.8" cy="274.4" r="0.5" fill="#6a625c"/><circle cx="372.6" cy="149.7" r="0.7" fill="#5c5a5e"/><circle cx="43.7" cy="128.9" r="0.6" fill="#7a6450"/><circle cx="83.6" cy="296.7" r="0.7" fill="#7a6450"/><circle cx="267.4" cy="376.3" r="0.6" fill="#7a6450"/><circle cx="116.9" cy="151.8" r="0.7" fill="#54565e"/><circle cx="16.7" cy="291.4" r="0.8" fill="#5c5a5e"/><circle cx="663.0" cy="165.8" r="0.5" fill="#5c5a5e"/><circle cx="193.2" cy="112.1" r="0.6" fill="#8a7058"/><circle cx="449.1" cy="167.5" r="0.6" fill="#54565e"/><circle cx="131.3" cy="125.5" r="0.8" fill="#8a7058"/><circle cx="26.0" cy="128.7" r="0.6" fill="#6c6c6c"/><circle cx="556.6" cy="236.0" r="0.7" fill="#54565e"/><circle cx="444.3" cy="238.2" r="0.5" fill="#6a625c"/><circle cx="553.1" cy="321.5" r="0.7" fill="#6a625c"/><circle cx="580.2" cy="242.2" r="0.5" fill="#5c5a5e"/><circle cx="451.5" cy="15.4" r="0.7" fill="#5c5a5e"/><circle cx="515.2" cy="143.1" r="0.5" fill="#54565e"/><circle cx="460.6" cy="163.0" r="0.6" fill="#7a6450"/><circle cx="349.6" cy="144.5" r="0.8" fill="#54565e"/><circle cx="616.7" cy="286.3" r="0.8" fill="#6c6c6c"/><circle cx="36.0" cy="289.1" r="0.8" fill="#8a7058"/><circle cx="339.4" cy="384.2" r="0.6" fill="#54565e"/><circle cx="505.2" cy="18.1" r="0.7" fill="#5c5a5e"/><circle cx="362.3" cy="401.3" r="0.6" fill="#6c6c6c"/><circle cx="172.6" cy="398.9" r="0.6" fill="#7a6450"/><circle cx="230.2" cy="38.3" r="0.7" fill="#5c5a5e"/><circle cx="90.5" cy="292.7" r="0.8" fill="#5c5a5e"/><circle cx="467.8" cy="2.4" r="0.8" fill="#5c5a5e"/><circle cx="620.5" cy="145.5" r="0.7" fill="#5c5a5e"/><circle cx="586.5" cy="58.7" r="0.6" fill="#7a6450"/><circle cx="417.3" cy="48.8" r="0.8" fill="#5c5a5e"/><circle cx="448.9" cy="64.1" r="0.8" fill="#54565e"/><circle cx="551.1" cy="47.4" r="0.7" fill="#6a625c"/><circle cx="239.0" cy="85.5" r="0.5" fill="#7a6450"/><circle cx="201.5" cy="45.8" r="0.7" fill="#54565e"/><circle cx="638.4" cy="66.8" r="0.8" fill="#54565e"/><circle cx="377.4" cy="119.9" r="0.5" fill="#6a625c"/><circle cx="7.2" cy="410.7" r="0.8" fill="#6a625c"/><circle cx="495.5" cy="137.3" r="0.7" fill="#6a625c"/><circle cx="427.7" cy="396.1" r="0.8" fill="#5c5a5e"/><circle cx="519.7" cy="133.2" r="0.7" fill="#6a625c"/><circle cx="427.3" cy="259.9" r="0.7" fill="#8a7058"/><circle cx="163.1" cy="57.4" r="0.5" fill="#6a625c"/><circle cx="513.5" cy="347.6" r="0.7" fill="#7a6450"/><circle cx="123.1" cy="264.2" r="0.6" fill="#6a625c"/><circle cx="520.2" cy="343.8" r="0.7" fill="#54565e"/><circle cx="122.4" cy="341.7" r="0.7" fill="#5c5a5e"/><circle cx="244.3" cy="228.2" r="0.7" fill="#7a6450"/><circle cx="158.7" cy="17.1" r="0.8" fill="#6a625c"/><circle cx="626.5" cy="204.7" r="0.8" fill="#8a7058"/><circle cx="104.4" cy="124.0" r="0.5" fill="#5c5a5e"/><circle cx="456.1" cy="67.7" r="0.8" fill="#8a7058"/><circle cx="643.0" cy="37.1" r="0.5" fill="#54565e"/><circle cx="317.8" cy="90.4" r="0.7" fill="#6a625c"/><circle cx="21.2" cy="252.8" r="0.8" fill="#5c5a5e"/><circle cx="187.8" cy="273.9" r="0.8" fill="#7a6450"/><circle cx="41.6" cy="3.6" r="0.6" fill="#8a7058"/><circle cx="109.0" cy="122.4" r="0.8" fill="#6c6c6c"/><circle cx="447.7" cy="235.0" r="0.8" fill="#6a625c"/><circle cx="359.8" cy="213.9" r="0.8" fill="#6c6c6c"/><circle cx="602.5" cy="358.3" r="0.8" fill="#6c6c6c"/><circle cx="411.0" cy="335.8" r="0.5" fill="#8a7058"/><circle cx="448.5" cy="252.2" r="0.7" fill="#6c6c6c"/><circle cx="378.7" cy="394.5" r="0.8" fill="#8a7058"/><circle cx="429.2" cy="123.9" r="0.7" fill="#6c6c6c"/><circle cx="586.8" cy="11.5" r="0.8" fill="#8a8a92"/><circle cx="147.5" cy="306.2" r="0.8" fill="#98887a"/><circle cx="97.4" cy="239.7" r="0.8" fill="#909090"/><circle cx="238.7" cy="99.5" r="0.8" fill="#909090"/><circle cx="262.8" cy="47.3" r="0.8" fill="#8a8a92"/><circle cx="642.1" cy="84.0" r="0.8" fill="#98887a"/><circle cx="146.7" cy="346.7" r="0.8" fill="#98887a"/><circle cx="124.3" cy="277.5" r="0.8" fill="#909090"/><circle cx="150.5" cy="189.7" r="0.8" fill="#98887a"/><circle cx="487.7" cy="376.4" r="0.8" fill="#98887a"/><circle cx="564.6" cy="281.3" r="0.8" fill="#909090"/><circle cx="89.0" cy="208.3" r="0.8" fill="#98887a"/><circle cx="415.4" cy="397.6" r="0.8" fill="#98887a"/><circle cx="305.0" cy="284.0" r="0.8" fill="#8a8a92"/><circle cx="641.8" cy="79.3" r="0.8" fill="#909090"/><circle cx="513.8" cy="56.6" r="0.8" fill="#98887a"/><circle cx="268.1" cy="19.5" r="0.8" fill="#98887a"/><circle cx="10.1" cy="246.0" r="0.8" fill="#8a8a92"/><circle cx="304.8" cy="49.9" r="0.8" fill="#8a8a92"/><circle cx="282.4" cy="367.9" r="0.8" fill="#8a8a92"/><circle cx="373.2" cy="379.8" r="0.8" fill="#a07a5c"/><circle cx="111.4" cy="308.6" r="0.8" fill="#a07a5c"/><circle cx="533.1" cy="304.7" r="0.8" fill="#98887a"/><circle cx="547.4" cy="50.8" r="0.8" fill="#a07a5c"/><circle cx="340.2" cy="217.2" r="0.8" fill="#a07a5c"/><circle cx="478.5" cy="18.0" r="0.8" fill="#a07a5c"/><circle cx="66.1" cy="227.2" r="0.8" fill="#98887a"/><circle cx="22.6" cy="376.8" r="0.8" fill="#8a8a92"/><circle cx="168.8" cy="80.0" r="0.8" fill="#909090"/><circle cx="14.1" cy="409.3" r="0.8" fill="#909090"/><circle cx="75.3" cy="8.7" r="0.8" fill="#98887a"/><circle cx="48.9" cy="107.0" r="0.8" fill="#8a8a92"/><circle cx="367.5" cy="120.1" r="0.8" fill="#909090"/><circle cx="554.4" cy="243.6" r="0.8" fill="#a07a5c"/><circle cx="357.0" cy="285.5" r="0.8" fill="#a07a5c"/><circle cx="629.0" cy="5.7" r="0.8" fill="#a07a5c"/><circle cx="659.3" cy="201.7" r="0.8" fill="#909090"/><circle cx="578.8" cy="331.4" r="0.8" fill="#98887a"/><circle cx="49.5" cy="256.9" r="0.8" fill="#909090"/><circle cx="558.9" cy="400.6" r="0.8" fill="#909090"/><circle cx="260.8" cy="361.4" r="0.8" fill="#98887a"/><circle cx="239.3" cy="218.7" r="0.8" fill="#a07a5c"/><circle cx="592.7" cy="243.9" r="0.8" fill="#98887a"/><circle cx="140.1" cy="339.1" r="0.8" fill="#909090"/><circle cx="219.7" cy="193.9" r="0.8" fill="#a07a5c"/><circle cx="208.4" cy="138.9" r="0.8" fill="#909090"/><circle cx="221.3" cy="8.5" r="0.8" fill="#909090"/><circle cx="581.0" cy="252.0" r="0.8" fill="#8a8a92"/><circle cx="482.0" cy="59.5" r="0.8" fill="#909090"/><circle cx="181.2" cy="207.0" r="0.8" fill="#a07a5c"/><circle cx="236.6" cy="237.4" r="0.8" fill="#8a8a92"/><circle cx="657.8" cy="14.1" r="0.8" fill="#98887a"/><circle cx="578.4" cy="320.6" r="0.8" fill="#98887a"/><circle cx="240.6" cy="116.6" r="0.8" fill="#8a8a92"/><circle cx="578.7" cy="388.6" r="0.8" fill="#98887a"/><circle cx="201.5" cy="316.0" r="0.8" fill="#a07a5c"/><circle cx="337.4" cy="263.0" r="0.8" fill="#a07a5c"/><circle cx="578.7" cy="296.3" r="0.8" fill="#a07a5c"/><circle cx="40.1" cy="139.6" r="0.8" fill="#a07a5c"/><circle cx="585.9" cy="324.0" r="0.8" fill="#a07a5c"/><circle cx="592.9" cy="335.0" r="0.8" fill="#a07a5c"/><circle cx="100.0" cy="85.0" r="0.8" fill="#909090"/><circle cx="268.5" cy="164.0" r="0.8" fill="#a07a5c"/><circle cx="616.2" cy="242.9" r="0.8" fill="#8a8a92"/><circle cx="199.9" cy="127.7" r="0.8" fill="#a07a5c"/><circle cx="48.7" cy="78.8" r="0.8" fill="#98887a"/><circle cx="387.8" cy="126.0" r="0.8" fill="#a07a5c"/><circle cx="654.7" cy="147.8" r="0.8" fill="#909090"/><circle cx="478.2" cy="381.7" r="0.8" fill="#909090"/><circle cx="211.7" cy="72.5" r="0.8" fill="#a07a5c"/><circle cx="362.3" cy="314.0" r="0.8" fill="#a07a5c"/><circle cx="157.1" cy="8.3" r="0.8" fill="#98887a"/><circle cx="264.9" cy="82.9" r="0.8" fill="#a07a5c"/><circle cx="572.9" cy="268.3" r="0.8" fill="#8a8a92"/><circle cx="160.3" cy="23.5" r="0.8" fill="#8a8a92"/><circle cx="398.5" cy="32.8" r="0.8" fill="#a07a5c"/><circle cx="476.7" cy="2.1" r="0.8" fill="#a07a5c"/><circle cx="356.0" cy="362.4" r="0.8" fill="#a07a5c"/><circle cx="611.9" cy="87.9" r="0.8" fill="#a07a5c"/><circle cx="575.3" cy="11.2" r="0.8" fill="#909090"/><circle cx="268.7" cy="281.1" r="0.8" fill="#a07a5c"/><circle cx="115.7" cy="357.4" r="0.8" fill="#98887a"/><circle cx="57.8" cy="253.7" r="0.8" fill="#909090"/><circle cx="654.9" cy="165.4" r="0.8" fill="#909090"/><circle cx="579.0" cy="10.7" r="0.8" fill="#a07a5c"/><circle cx="374.0" cy="408.8" r="0.8" fill="#98887a"/><circle cx="275.2" cy="294.0" r="0.8" fill="#a07a5c"/><circle cx="103.9" cy="7.7" r="0.8" fill="#8a8a92"/><circle cx="94.6" cy="317.6" r="0.8" fill="#98887a"/><circle cx="237.3" cy="149.8" r="0.8" fill="#a07a5c"/><circle cx="47.7" cy="25.3" r="1.7" fill="#e8b888" fill-opacity="0.35"/><circle cx="47.7" cy="25.3" r="1.2" fill="#e8b888"/><circle cx="82.4" cy="24.2" r="1.15" fill="#f4f4f4" fill-opacity="0.8"/><circle cx="105.1" cy="7.2" r="1.15" fill="#f4f4f4" fill-opacity="0.8"/><circle cx="178.4" cy="16.8" r="1.7" fill="#e8b888" fill-opacity="0.35"/><circle cx="178.4" cy="16.8" r="1.2" fill="#e8b888"/><circle cx="224.3" cy="12.2" r="1.15" fill="#f4f4f4" fill-opacity="0.8"/><circle cx="136.3" cy="28.5" r="1.15" fill="#f4f4f4" fill-opacity="0.8"/><circle cx="75.7" cy="45.0" r="1.15" fill="#f4f4f4" fill-opacity="0.8"/><circle cx="111.7" cy="45.6" r="1.7" fill="#e8b888" fill-opacity="0.35"/><circle cx="111.7" cy="45.6" r="1.2" fill="#e8b888"/><circle cx="121.1" cy="46.1" r="1.15" fill="#e8b888" fill-opacity="0.8"/><circle cx="224.3" cy="43.4" r="1.15" fill="#f4f4f4" fill-opacity="0.8"/><circle cx="237.7" cy="32.2" r="1.15" fill="#f4f4f4" fill-opacity="0.8"/><circle cx="344.4" cy="10.9" r="2.4" fill="#f4f4f4" fill-opacity="0.3"/><circle cx="344.4" cy="10.9" r="1.5" fill="#fff"/><circle cx="365.8" cy="27.2" r="1.15" fill="#f4f4f4" fill-opacity="0.8"/><circle cx="360.4" cy="45.6" r="1.15" fill="#f4f4f4" fill-opacity="0.8"/><circle cx="8.2" cy="81.1" r="1.7" fill="#e8b888" fill-opacity="0.35"/><circle cx="8.2" cy="81.1" r="1.2" fill="#e8b888"/><circle cx="72.5" cy="85.3" r="3.4" fill="#f0d8b8" fill-opacity="0.22"/><circle cx="72.5" cy="85.3" r="2.3" fill="#f0d8b8" fill-opacity="0.5"/><circle cx="72.5" cy="85.3" r="1.6" fill="#fff"/><circle cx="44.5" cy="104.8" r="1.7" fill="#f4f4f4" fill-opacity="0.35"/><circle cx="44.5" cy="104.8" r="1.2" fill="#f4f4f4"/><circle cx="17.0" cy="107.5" r="1.15" fill="#f4f4f4" fill-opacity="0.8"/><circle cx="162.4" cy="99.2" r="1.15" fill="#f4f4f4" fill-opacity="0.8"/><circle cx="177.1" cy="103.8" r="1.15" fill="#f4f4f4" fill-opacity="0.8"/><circle cx="148.3" cy="113.9" r="1.15" fill="#f4f4f4" fill-opacity="0.8"/><circle cx="148.8" cy="125.6" r="1.15" fill="#c8d8f8" fill-opacity="0.8"/><circle cx="4.2" cy="130.2" r="1.15" fill="#f4f4f4" fill-opacity="0.8"/><circle cx="88.2" cy="141.4" r="1.15" fill="#f4f4f4" fill-opacity="0.8"/><circle cx="75.2" cy="145.1" r="1.15" fill="#f4f4f4" fill-opacity="0.8"/><circle cx="74.9" cy="153.9" r="1.15" fill="#e8b888" fill-opacity="0.8"/><circle cx="81.6" cy="155.3" r="1.15" fill="#f4f4f4" fill-opacity="0.8"/><circle cx="69.6" cy="162.7" r="1.15" fill="#e8b888" fill-opacity="0.8"/><circle cx="126.1" cy="163.0" r="1.15" fill="#f4f4f4" fill-opacity="0.8"/><circle cx="178.4" cy="135.0" r="1.15" fill="#e8b888" fill-opacity="0.8"/><circle cx="193.6" cy="136.0" r="1.15" fill="#f4f4f4" fill-opacity="0.8"/><circle cx="279.6" cy="141.9" r="1.15" fill="#f4f4f4" fill-opacity="0.8"/><circle cx="308.9" cy="148.3" r="1.7" fill="#f4f4f4" fill-opacity="0.35"/><circle cx="308.9" cy="148.3" r="1.2" fill="#f4f4f4"/><circle cx="322.5" cy="142.4" r="1.15" fill="#f4f4f4" fill-opacity="0.8"/><circle cx="326.5" cy="130.2" r="1.15" fill="#f4f4f4" fill-opacity="0.8"/><circle cx="262.8" cy="152.0" r="1.15" fill="#f4f4f4" fill-opacity="0.8"/><circle cx="342.5" cy="157.1" r="1.15" fill="#f4f4f4" fill-opacity="0.8"/><circle cx="350.3" cy="162.2" r="1.15" fill="#f4f4f4" fill-opacity="0.8"/><circle cx="234.2" cy="189.7" r="1.7" fill="#f4f4f4" fill-opacity="0.35"/><circle cx="234.2" cy="189.7" r="1.2" fill="#f4f4f4"/><circle cx="230.2" cy="195.0" r="1.7" fill="#f4f4f4" fill-opacity="0.35"/><circle cx="230.2" cy="195.0" r="1.2" fill="#f4f4f4"/><circle cx="158.2" cy="172.6" r="1.15" fill="#f4f4f4" fill-opacity="0.8"/><circle cx="183.5" cy="167.3" r="1.15" fill="#f4f4f4" fill-opacity="0.8"/><circle cx="282.2" cy="90.4" r="1.15" fill="#f4f4f4" fill-opacity="0.8"/><circle cx="284.4" cy="82.4" r="1.15" fill="#f4f4f4" fill-opacity="0.8"/><circle cx="254.2" cy="74.4" r="1.15" fill="#f4f4f4" fill-opacity="0.8"/><circle cx="258.5" cy="73.9" r="1.15" fill="#f4f4f4" fill-opacity="0.8"/><circle cx="253.1" cy="95.7" r="1.15" fill="#e8b888" fill-opacity="0.8"/><circle cx="321.7" cy="100.3" r="1.15" fill="#e8b888" fill-opacity="0.8"/><circle cx="277.2" cy="109.6" r="1.15" fill="#f4f4f4" fill-opacity="0.8"/><circle cx="345.7" cy="59.7" r="1.15" fill="#e8b888" fill-opacity="0.8"/><circle cx="330.5" cy="59.2" r="1.15" fill="#f4f4f4" fill-opacity="0.8"/><circle cx="204.3" cy="47.2" r="1.15" fill="#e8b888" fill-opacity="0.8"/><circle cx="187.0" cy="38.4" r="1.15" fill="#f4f4f4" fill-opacity="0.8"/><circle cx="189.1" cy="41.0" r="1.15" fill="#f4f4f4" fill-opacity="0.8"/><circle cx="92.8" cy="216.9" r="1.15" fill="#f4f4f4" fill-opacity="0.8"/><circle cx="99.5" cy="224.7" r="1.15" fill="#f4f4f4" fill-opacity="0.8"/><circle cx="223.8" cy="221.2" r="3.4" fill="#f4f4f4" fill-opacity="0.22"/><circle cx="223.8" cy="221.2" r="2.3" fill="#f4f4f4" fill-opacity="0.5"/><circle cx="223.8" cy="221.2" r="1.6" fill="#fff"/><circle cx="238.5" cy="216.1" r="1.15" fill="#f4f4f4" fill-opacity="0.8"/><circle cx="157.4" cy="240.7" r="3.4" fill="#f4f4f4" fill-opacity="0.22"/><circle cx="157.4" cy="240.7" r="2.3" fill="#f4f4f4" fill-opacity="0.5"/><circle cx="157.4" cy="240.7" r="1.6" fill="#fff"/><circle cx="7.9" cy="240.4" r="1.15" fill="#f4f4f4" fill-opacity="0.8"/><circle cx="95.5" cy="261.0" r="1.15" fill="#f4f4f4" fill-opacity="0.8"/><circle cx="102.4" cy="256.2" r="0.8" fill="#c8d8f8"/><circle cx="114.4" cy="269.0" r="1.15" fill="#f4f4f4" fill-opacity="0.8"/><circle cx="16.2" cy="262.8" r="1.15" fill="#f4f4f4" fill-opacity="0.8"/><circle cx="191.5" cy="261.0" r="1.15" fill="#e8b888" fill-opacity="0.8"/><circle cx="184.3" cy="255.6" r="1.15" fill="#e8b888" fill-opacity="0.8"/><circle cx="320.9" cy="255.6" r="1.7" fill="#f0d8b8" fill-opacity="0.35"/><circle cx="320.9" cy="255.6" r="1.2" fill="#f0d8b8"/><circle cx="278.5" cy="259.6" r="1.15" fill="#f4f4f4" fill-opacity="0.8"/><circle cx="255.5" cy="272.4" r="1.15" fill="#f4f4f4" fill-opacity="0.8"/><circle cx="306.3" cy="224.7" r="1.15" fill="#f4f4f4" fill-opacity="0.8"/><circle cx="365.0" cy="213.5" r="1.7" fill="#f4f4f4" fill-opacity="0.35"/><circle cx="365.0" cy="213.5" r="1.2" fill="#f4f4f4"/><circle cx="262.5" cy="236.7" r="1.15" fill="#e8b888" fill-opacity="0.8"/><circle cx="172.8" cy="281.0" r="1.15" fill="#e8b888" fill-opacity="0.8"/><circle cx="318.0" cy="296.5" r="1.7" fill="#f0d8b8" fill-opacity="0.35"/><circle cx="318.0" cy="296.5" r="1.2" fill="#f0d8b8"/><circle cx="340.7" cy="298.6" r="2.4" fill="#f4f4f4" fill-opacity="0.3"/><circle cx="340.7" cy="298.6" r="1.5" fill="#fff"/><circle cx="355.9" cy="302.3" r="1.15" fill="#f4f4f4" fill-opacity="0.8"/><circle cx="275.8" cy="293.3" r="1.15" fill="#f4f4f4" fill-opacity="0.8"/><circle cx="367.6" cy="283.9" r="1.15" fill="#f4f4f4" fill-opacity="0.8"/><circle cx="91.7" cy="310.3" r="1.15" fill="#f4f4f4" fill-opacity="0.8"/><circle cx="111.2" cy="314.6" r="1.7" fill="#f4f4f4" fill-opacity="0.35"/><circle cx="111.2" cy="314.6" r="1.2" fill="#f4f4f4"/><circle cx="88.5" cy="326.1" r="2.4" fill="#f4f4f4" fill-opacity="0.3"/><circle cx="88.5" cy="326.1" r="1.5" fill="#fff"/><circle cx="115.7" cy="328.2" r="1.15" fill="#e8b888" fill-opacity="0.8"/><circle cx="7.4" cy="330.9" r="1.7" fill="#e8b888" fill-opacity="0.35"/><circle cx="7.4" cy="330.9" r="1.2" fill="#e8b888"/><circle cx="12.5" cy="317.3" r="1.15" fill="#e8b888" fill-opacity="0.8"/><circle cx="246.2" cy="336.0" r="1.15" fill="#f4f4f4" fill-opacity="0.8"/><circle cx="303.6" cy="338.6" r="1.15" fill="#f4f4f4" fill-opacity="0.8"/><circle cx="140.3" cy="340.8" r="1.15" fill="#f4f4f4" fill-opacity="0.8"/><circle cx="134.4" cy="353.8" r="1.15" fill="#e8b888" fill-opacity="0.8"/><circle cx="159.5" cy="350.1" r="1.15" fill="#f4f4f4" fill-opacity="0.8"/><circle cx="68.0" cy="347.7" r="1.15" fill="#f4f4f4" fill-opacity="0.8"/><circle cx="258.5" cy="350.6" r="1.15" fill="#e8b888" fill-opacity="0.8"/><circle cx="285.2" cy="360.2" r="1.15" fill="#f4f4f4" fill-opacity="0.8"/><circle cx="338.8" cy="370.9" r="1.15" fill="#e8b888" fill-opacity="0.8"/><circle cx="362.5" cy="368.2" r="1.15" fill="#f4f4f4" fill-opacity="0.8"/><circle cx="106.9" cy="373.8" r="1.15" fill="#e8b888" fill-opacity="0.8"/><circle cx="138.9" cy="377.3" r="1.15" fill="#f4f4f4" fill-opacity="0.8"/><circle cx="216.3" cy="374.9" r="1.15" fill="#f4f4f4" fill-opacity="0.8"/><circle cx="23.4" cy="392.8" r="1.15" fill="#f4f4f4" fill-opacity="0.8"/><circle cx="85.5" cy="387.5" r="1.15" fill="#f4f4f4" fill-opacity="0.8"/><circle cx="161.6" cy="408.0" r="1.7" fill="#f4f4f4" fill-opacity="0.35"/><circle cx="161.6" cy="408.0" r="1.2" fill="#f4f4f4"/><circle cx="297.2" cy="390.9" r="1.15" fill="#f4f4f4" fill-opacity="0.8"/><circle cx="365.8" cy="387.5" r="1.15" fill="#f4f4f4" fill-opacity="0.8"/><circle cx="229.1" cy="381.6" r="1.15" fill="#f4f4f4" fill-opacity="0.8"/><circle cx="244.9" cy="307.4" r="1.15" fill="#f4f4f4" fill-opacity="0.8"/><circle cx="258.5" cy="311.4" r="1.15" fill="#f4f4f4" fill-opacity="0.8"/><circle cx="209.7" cy="318.9" r="1.15" fill="#f4f4f4" fill-opacity="0.8"/><circle cx="52.5" cy="307.4" r="1.15" fill="#e8b888" fill-opacity="0.8"/><circle cx="411.9" cy="15.7" r="1.7" fill="#e8b888" fill-opacity="0.35"/><circle cx="411.9" cy="15.7" r="1.2" fill="#e8b888"/><circle cx="421.8" cy="21.8" r="1.7" fill="#e8b888" fill-opacity="0.35"/><circle cx="421.8" cy="21.8" r="1.2" fill="#e8b888"/><circle cx="489.3" cy="12.5" r="1.15" fill="#f4f4f4" fill-opacity="0.8"/><circle cx="528.8" cy="7.2" r="1.15" fill="#f4f4f4" fill-opacity="0.8"/><circle cx="409.2" cy="33.6" r="1.15" fill="#f4f4f4" fill-opacity="0.8"/><circle cx="459.4" cy="35.7" r="1.15" fill="#f4f4f4" fill-opacity="0.8"/><circle cx="445.0" cy="52.0" r="1.7" fill="#e8b888" fill-opacity="0.35"/><circle cx="445.0" cy="52.0" r="1.2" fill="#e8b888"/><circle cx="490.9" cy="53.6" r="2.4" fill="#f4f4f4" fill-opacity="0.3"/><circle cx="490.9" cy="53.6" r="1.5" fill="#fff"/><circle cx="455.4" cy="65.6" r="1.7" fill="#e8b888" fill-opacity="0.35"/><circle cx="455.4" cy="65.6" r="1.2" fill="#e8b888"/><circle cx="600.3" cy="54.7" r="1.15" fill="#e8b888" fill-opacity="0.8"/><circle cx="659.0" cy="51.5" r="1.15" fill="#f4f4f4" fill-opacity="0.8"/><circle cx="625.7" cy="75.7" r="1.15" fill="#e8b888" fill-opacity="0.8"/><circle cx="524.8" cy="81.6" r="1.15" fill="#f4f4f4" fill-opacity="0.8"/><circle cx="537.9" cy="89.9" r="1.15" fill="#f4f4f4" fill-opacity="0.8"/><circle cx="497.8" cy="90.7" r="1.15" fill="#f4f4f4" fill-opacity="0.8"/><circle cx="450.9" cy="86.9" r="1.15" fill="#f4f4f4" fill-opacity="0.8"/><circle cx="400.2" cy="85.9" r="1.15" fill="#f4f4f4" fill-opacity="0.8"/><circle cx="471.7" cy="99.5" r="1.7" fill="#c8d8f8" fill-opacity="0.35"/><circle cx="471.7" cy="99.5" r="1.2" fill="#c8d8f8"/><circle cx="499.4" cy="104.3" r="1.15" fill="#f4f4f4" fill-opacity="0.8"/><circle cx="562.7" cy="108.8" r="1.15" fill="#f4f4f4" fill-opacity="0.8"/><circle cx="439.9" cy="121.6" r="1.15" fill="#f4f4f4" fill-opacity="0.8"/><circle cx="494.9" cy="124.6" r="3.4" fill="#e8b888" fill-opacity="0.22"/><circle cx="494.9" cy="124.6" r="2.3" fill="#e8b888" fill-opacity="0.5"/><circle cx="494.9" cy="124.6" r="1.6" fill="#ffe2b8"/><circle cx="498.9" cy="127.2" r="1.15" fill="#f4f4f4" fill-opacity="0.8"/><circle cx="499.5" cy="119.0" r="1.15" fill="#f4f4f4" fill-opacity="0.8"/><circle cx="502.9" cy="119.0" r="1.15" fill="#f4f4f4" fill-opacity="0.8"/><circle cx="482.9" cy="132.6" r="2.4" fill="#e8b888" fill-opacity="0.3"/><circle cx="482.9" cy="132.6" r="1.5" fill="#ffd8a8"/><circle cx="474.1" cy="138.7" r="2.4" fill="#c8d8f8" fill-opacity="0.3"/><circle cx="474.1" cy="138.7" r="1.5" fill="#fff"/><circle cx="482.6" cy="141.4" r="1.15" fill="#f4f4f4" fill-opacity="0.8"/><circle cx="623.8" cy="127.0" r="1.15" fill="#f4f4f4" fill-opacity="0.8"/><circle cx="421.0" cy="159.0" r="1.15" fill="#f4f4f4" fill-opacity="0.8"/><circle cx="563.5" cy="147.5" r="1.15" fill="#f4f4f4" fill-opacity="0.8"/><circle cx="565.9" cy="164.9" r="1.15" fill="#f4f4f4" fill-opacity="0.8"/><circle cx="548.0" cy="139.2" r="1.15" fill="#f4f4f4" fill-opacity="0.8"/><circle cx="599.2" cy="183.5" r="1.15" fill="#e8b888" fill-opacity="0.8"/><circle cx="535.2" cy="167.0" r="1.15" fill="#f4f4f4" fill-opacity="0.8"/><circle cx="609.1" cy="141.1" r="1.15" fill="#f4f4f4" fill-opacity="0.8"/><circle cx="637.4" cy="140.6" r="1.15" fill="#f4f4f4" fill-opacity="0.8"/><circle cx="309.7" cy="141.6" r="1.15" fill="#f4f4f4" fill-opacity="0.8"/><circle cx="354.8" cy="87.7" r="1.15" fill="#f4f4f4" fill-opacity="0.8"/><circle cx="386.0" cy="85.9" r="1.15" fill="#f4f4f4" fill-opacity="0.8"/><circle cx="397.8" cy="214.5" r="1.7" fill="#e8b888" fill-opacity="0.35"/><circle cx="397.8" cy="214.5" r="1.2" fill="#e8b888"/><circle cx="375.9" cy="210.8" r="1.15" fill="#f4f4f4" fill-opacity="0.8"/><circle cx="430.1" cy="231.1" r="1.15" fill="#f4f4f4" fill-opacity="0.8"/><circle cx="514.6" cy="220.9" r="1.15" fill="#f4f4f4" fill-opacity="0.8"/><circle cx="575.2" cy="214.3" r="1.7" fill="#f4f4f4" fill-opacity="0.35"/><circle cx="575.2" cy="214.3" r="1.2" fill="#f4f4f4"/><circle cx="612.6" cy="226.3" r="1.15" fill="#f4f4f4" fill-opacity="0.8"/><circle cx="527.2" cy="242.6" r="1.7" fill="#f4f4f4" fill-opacity="0.35"/><circle cx="527.2" cy="242.6" r="1.2" fill="#f4f4f4"/><circle cx="512.8" cy="251.6" r="1.15" fill="#f4f4f4" fill-opacity="0.8"/><circle cx="546.7" cy="248.4" r="1.15" fill="#e8b888" fill-opacity="0.8"/><circle cx="562.4" cy="258.3" r="1.7" fill="#f4f4f4" fill-opacity="0.35"/><circle cx="562.4" cy="258.3" r="1.2" fill="#f4f4f4"/><circle cx="612.6" cy="242.6" r="1.15" fill="#f4f4f4" fill-opacity="0.8"/><circle cx="589.6" cy="250.6" r="1.15" fill="#f4f4f4" fill-opacity="0.8"/><circle cx="448.2" cy="273.2" r="1.15" fill="#c8d8f8" fill-opacity="0.8"/><circle cx="449.8" cy="275.7" r="1.15" fill="#e8b888" fill-opacity="0.8"/><circle cx="489.3" cy="269.2" r="1.15" fill="#f4f4f4" fill-opacity="0.8"/><circle cx="491.7" cy="279.4" r="1.15" fill="#f4f4f4" fill-opacity="0.8"/><circle cx="500.8" cy="283.7" r="1.15" fill="#f4f4f4" fill-opacity="0.8"/><circle cx="607.2" cy="278.9" r="1.15" fill="#f4f4f4" fill-opacity="0.8"/><circle cx="660.6" cy="274.9" r="1.15" fill="#f4f4f4" fill-opacity="0.8"/><circle cx="600.0" cy="285.3" r="1.15" fill="#e8b888" fill-opacity="0.8"/><circle cx="436.2" cy="282.6" r="1.15" fill="#f4f4f4" fill-opacity="0.8"/><circle cx="502.6" cy="303.7" r="1.7" fill="#f4f4f4" fill-opacity="0.35"/><circle cx="502.6" cy="303.7" r="1.2" fill="#f4f4f4"/><circle cx="497.3" cy="302.1" r="1.15" fill="#f4f4f4" fill-opacity="0.8"/><circle cx="564.0" cy="301.0" r="1.15" fill="#f4f4f4" fill-opacity="0.8"/><circle cx="583.2" cy="300.7" r="1.15" fill="#f4f4f4" fill-opacity="0.8"/><circle cx="519.7" cy="310.9" r="1.15" fill="#f4f4f4" fill-opacity="0.8"/><circle cx="661.7" cy="309.0" r="1.15" fill="#f4f4f4" fill-opacity="0.8"/><circle cx="659.8" cy="330.4" r="1.7" fill="#f4f4f4" fill-opacity="0.35"/><circle cx="659.8" cy="330.4" r="1.2" fill="#f4f4f4"/><circle cx="575.2" cy="334.1" r="1.15" fill="#e8b888" fill-opacity="0.8"/><circle cx="430.6" cy="341.8" r="1.15" fill="#f4f4f4" fill-opacity="0.8"/><circle cx="427.1" cy="331.7" r="1.15" fill="#f4f4f4" fill-opacity="0.8"/><circle cx="430.3" cy="327.2" r="1.15" fill="#f4f4f4" fill-opacity="0.8"/><circle cx="437.8" cy="313.8" r="1.15" fill="#f4f4f4" fill-opacity="0.8"/><circle cx="619.3" cy="348.0" r="1.15" fill="#f4f4f4" fill-opacity="0.8"/><circle cx="611.3" cy="362.6" r="1.7" fill="#f4f4f4" fill-opacity="0.35"/><circle cx="611.3" cy="362.6" r="1.2" fill="#f4f4f4"/><circle cx="595.5" cy="361.0" r="1.15" fill="#f4f4f4" fill-opacity="0.8"/><circle cx="400.2" cy="361.8" r="1.15" fill="#f4f4f4" fill-opacity="0.8"/><circle cx="404.7" cy="375.2" r="1.15" fill="#f4f4f4" fill-opacity="0.8"/><circle cx="400.7" cy="380.3" r="1.15" fill="#f4f4f4" fill-opacity="0.8"/><circle cx="446.3" cy="365.6" r="1.15" fill="#f4f4f4" fill-opacity="0.8"/><circle cx="490.6" cy="363.7" r="1.15" fill="#f4f4f4" fill-opacity="0.8"/><circle cx="489.6" cy="369.9" r="1.15" fill="#f4f4f4" fill-opacity="0.8"/><circle cx="568.8" cy="372.2" r="1.15" fill="#f4f4f4" fill-opacity="0.8"/><circle cx="511.5" cy="380.8" r="1.15" fill="#f4f4f4" fill-opacity="0.8"/><circle cx="446.6" cy="397.1" r="1.15" fill="#f4f4f4" fill-opacity="0.8"/><circle cx="517.1" cy="397.6" r="1.15" fill="#e8b888" fill-opacity="0.8"/><circle cx="400.4" cy="401.9" r="1.15" fill="#f4f4f4" fill-opacity="0.8"/><circle cx="643.0" cy="413.6" r="1.7" fill="#f4f4f4" fill-opacity="0.35"/><circle cx="643.0" cy="413.6" r="1.2" fill="#f4f4f4"/><circle cx="649.7" cy="401.1" r="1.15" fill="#f4f4f4" fill-opacity="0.8"/><circle cx="604.6" cy="409.1" r="1.15" fill="#f4f4f4" fill-opacity="0.8"/><circle cx="334.5" cy="200.3" r="1.15" fill="#f4f4f4" fill-opacity="0.8"/><circle cx="343.9" cy="199.2" r="0.8" fill="#7a7068"/><circle cx="361.5" cy="206.0" r="0.8" fill="#807a78"/><circle cx="331.9" cy="333.8" r="1.15" fill="#f4f4f4" fill-opacity="0.8"/><circle cx="330.5" cy="343.2" r="1.15" fill="#f4f4f4" fill-opacity="0.8"/><circle cx="354.8" cy="356.5" r="1.15" fill="#f4f4f4" fill-opacity="0.8"/><path d="M66.5 85.3H78.5M72.5 79.3V91.3" stroke="#f0d8b8" stroke-opacity="0.35" stroke-width="0.7"/><path d="M217.8 221.2H229.8M223.8 215.2V227.2" stroke="#f4f4f4" stroke-opacity="0.35" stroke-width="0.7"/><path d="M151.4 240.7H163.4M157.4 234.7V246.7" stroke="#f4f4f4" stroke-opacity="0.35" stroke-width="0.7"/><path d="M488.9 124.6H500.9M494.9 118.6V130.6" stroke="#e8b888" stroke-opacity="0.35" stroke-width="0.7"/><g transform="rotate(-13.8 338.8 209.0)"><ellipse cx="338.8" cy="208.0" rx="27" ry="13.500" fill="url(#gal0)"/><ellipse cx="338.8" cy="208.0" rx="14" ry="7.500" fill="url(#gal1)"/><ellipse cx="338.8" cy="209.2" rx="21.500" ry="2.300" fill="url(#gal2)"/><ellipse cx="338.8" cy="208.1" rx="4.500" ry="2.200" fill="url(#gal3)"/><path d="M318.8 210.5Q338.8 211.3 358.8 209.9" stroke="#3c2414" stroke-opacity="0.800" stroke-width="0.900" fill="none"/></g></g></svg></div>
</div>
<div id="hpanel" class="abs"><div class="abs" style="left:2px;top:19.7px;width:379px;height:666px;background:#d8d8d8"></div><div class="abs" style="left:2px;top:667.9px;width:379px;height:17.8px;background:#c3c0b5"></div><svg class="abs" style="left:0;top:0" width="383" height="688" viewBox="0 0 383 688"><defs><linearGradient id="hgrad" x1="0" y1="0" x2="1" y2="0"><stop offset="0" stop-color="#000"/><stop offset="1" stop-color="#fff"/></linearGradient><linearGradient id="cbg2" x1="0" y1="0" x2="0" y2="1"><stop offset="0" stop-color="#f2f2f2"/><stop offset="0.5" stop-color="#e2e2e2"/><stop offset="1" stop-color="#d2d2d2"/></linearGradient><pattern id="chk" width="2" height="2" patternUnits="userSpaceOnUse"><rect width="1" height="1" fill="#556"/><rect x="1" y="1" width="1" height="1" fill="#556"/></pattern></defs><g transform="translate(4,3.7)"><rect x="0" y="0" width="13.500" height="13" fill="#6a86e8"/><path d="M3.500 0V13M7 0V13M10.500 0V13M0 3.200H13.500M0 6.500H13.500M0 9.800H13.500" stroke="#9ab0f4" stroke-width="0.600"/><path d="M0.800 13C2.500 11.500 3.300 8 4 2.500C4.200 1 5 1 5.300 2.500C6 7 6.500 10.500 9 11.300C11 11.800 12.500 11 12.800 9.500V13Z" fill="#f08838"/></g><g stroke="#fff" fill="none" stroke-width="1.800"><path d="M352.3 8.9H359.8" stroke-width="1.500"/><path d="M356 9.9L359.7 13.8H352.3Z" fill="#fff" stroke="none"/><path d="M369.1 7.7L375.9 14.5M375.9 7.7L369.1 14.5" stroke-width="1.700"/></g><rect x="5.2" y="23.4" width="372" height="226" fill="#8db4f2"/><rect x="6.7" y="24.9" width="369.0" height="222.0" fill="#070707"/><path d="M52.83 24.9V246.9M6.7 52.65H375.7" stroke="#343434" stroke-width="1" stroke-dasharray="1 1.500"/><path d="M98.95 24.9V246.9M6.7 80.4H375.7" stroke="#3e3e3e" stroke-width="1"/><path d="M145.08 24.9V246.9M6.7 108.15H375.7" stroke="#343434" stroke-width="1" stroke-dasharray="1 1.500"/><path d="M191.2 24.9V246.9M6.7 135.9H375.7" stroke="#3e3e3e" stroke-width="1"/><path d="M237.33 24.9V246.9M6.7 163.65H375.7" stroke="#343434" stroke-width="1" stroke-dasharray="1 1.500"/><path d="M283.45 24.9V246.9M6.7 191.4H375.7" stroke="#3e3e3e" stroke-width="1"/><path d="M329.58 24.9V246.9M6.7 219.15H375.7" stroke="#343434" stroke-width="1" stroke-dasharray="1 1.500"/><path d="M6.7 247.4H375.7" stroke="#8cc49c" stroke-width="1"/><path d="M30.4 24.9V141.06" stroke="#10b810" stroke-width="1.700"/><polygon points="30.1,95.7 29.7,136.52 27.7,175.84 26.7,215.15 24.8,240.85 23.8,246.9 24.7,246.9 25.7,240.85 27.7,215.15 29.3,175.84 31.1,136.52 31.0,95.7" fill="#28c030"/><polygon points="32.5,95.7 33.2,136.52 33.6,175.84 35.6,215.15 38.2,240.85 40.2,246.9 42.4,246.9 40.5,240.85 37.5,215.15 35.5,175.84 34.6,136.52 33.2,95.7" fill="#e2a4da"/><polygon points="31.0,95.7 31.1,136.52 29.3,175.84 27.7,215.15 25.7,240.85 24.7,246.9 40.2,246.9 38.2,240.85 35.6,215.15 33.6,175.84 33.2,136.52 32.5,95.7" fill="#c8e6c8"/><polygon points="31.7,110.82 32.9,110.82 34.9,224.22 35.7,246.9 31.3,246.9" fill="#e4f2e4"/><path d="M33.7 115.36v10.584M35.2 171.3v12.096M36.7 210.61v7.56" stroke="#1888c0" stroke-width="1.200"/><path d="M29.9 125.94v10.584" stroke="#c8a020" stroke-width="1.100"/><path d="M32.2 91.7v6" stroke="#d02020" stroke-width="1.200"/><path d="M30.3 159.2V246.9M40.5 243.4V246.9" stroke="#1c1c1c" stroke-width="0.600"/><path d="M41.7 246.1H54.7" stroke="#b8d8b8" stroke-width="1.200"/><path d="M54.7 246.1H68.7" stroke="#a05858" stroke-width="1" stroke-dasharray="3 2"/><rect x="5.5" y="253.4" width="14.7" height="15.0" fill="#f4f4f4" stroke="#9c9c9c" stroke-width="0.900"/><g transform="translate(12.9,260.9) scale(0.86) translate(-8,-8)"><path d="M8 1v14M1 8h14" stroke="#333" stroke-width="1.500"/><rect x="5.500" y="5.500" width="5" height="5" fill="#f4f4f4" stroke="#6a6a6a" stroke-width="0.900"/><path d="M8 6.300v3.400M6.300 8h3.400" stroke="#9a9a9a" stroke-width="0.700"/></g><g transform="translate(31.2,260.9) scale(0.86) translate(-8,-8)"><g transform="translate(8,8) scale(1,1)"><path d="M0.500 0.500L4.500 4.500" stroke="#333" stroke-width="2"/><path d="M6.500 1.500V6.500H1.500Z" fill="#333"/></g><g transform="translate(8,8) scale(-1,1)"><path d="M0.500 0.500L4.500 4.500" stroke="#333" stroke-width="2"/><path d="M6.500 1.500V6.500H1.500Z" fill="#333"/></g><g transform="translate(8,8) scale(1,-1)"><path d="M0.500 0.500L4.500 4.500" stroke="#333" stroke-width="2"/><path d="M6.500 1.500V6.500H1.500Z" fill="#333"/></g><g transform="translate(8,8) scale(-1,-1)"><path d="M0.500 0.500L4.500 4.500" stroke="#333" stroke-width="2"/><path d="M6.500 1.500V6.500H1.500Z" fill="#333"/></g></g><g transform="translate(49.8,260.9) scale(0.86) translate(-8,-8)"><g transform="translate(8,8) scale(1,1)"><path d="M2.500 2.500L6.800 6.800" stroke="#333" stroke-width="2"/><path d="M0.800 5.600V0.800H5.600Z" fill="#333"/></g><g transform="translate(8,8) scale(-1,1)"><path d="M2.500 2.500L6.800 6.800" stroke="#333" stroke-width="2"/><path d="M0.800 5.600V0.800H5.600Z" fill="#333"/></g><g transform="translate(8,8) scale(1,-1)"><path d="M2.500 2.500L6.800 6.800" stroke="#333" stroke-width="2"/><path d="M0.800 5.600V0.800H5.600Z" fill="#333"/></g><g transform="translate(8,8) scale(-1,-1)"><path d="M2.500 2.500L6.800 6.800" stroke="#333" stroke-width="2"/><path d="M0.800 5.600V0.800H5.600Z" fill="#333"/></g></g><g transform="translate(68.8,260.9) scale(0.86) translate(-8,-8)"><g transform="rotate(0 8 8)"><path d="M8 0.300L11.800 4.600H4.200Z" fill="#333"/><path d="M8 4V6.300" stroke="#333" stroke-width="2"/></g><g transform="rotate(90 8 8)"><path d="M8 0.300L11.800 4.600H4.200Z" fill="#333"/><path d="M8 4V6.300" stroke="#333" stroke-width="2"/></g><g transform="rotate(180 8 8)"><path d="M8 0.300L11.800 4.600H4.200Z" fill="#333"/><path d="M8 4V6.300" stroke="#333" stroke-width="2"/></g><g transform="rotate(270 8 8)"><path d="M8 0.300L11.800 4.600H4.200Z" fill="#333"/><path d="M8 4V6.300" stroke="#333" stroke-width="2"/></g><circle cx="8" cy="8" r="1.400" fill="none" stroke="#333" stroke-width="0.900"/></g><rect x="80.3" y="253.4" width="41.6" height="15.0" fill="#f2f2f2" stroke="#a0a0a0" stroke-width="0.900"/><rect x="110.4" y="253.9" width="11" height="14.0" fill="#dadada"/><path d="M110.4 253.9V267.9" stroke="#bcbcbc" stroke-width="0.800"/><path d="M113.1 259.4L115.9 255.9L118.7 259.4ZM113.1 262.4L115.9 265.9L118.7 262.4Z" fill="#1a1a1a"/><rect x="125.6" y="253.4" width="41.6" height="15.0" fill="#f2f2f2" stroke="#a0a0a0" stroke-width="0.900"/><rect x="155.7" y="253.9" width="11" height="14.0" fill="#dadada"/><path d="M155.7 253.9V267.9" stroke="#bcbcbc" stroke-width="0.800"/><path d="M158.4 259.4L161.2 255.9L164.0 259.4ZM158.4 262.4L161.2 265.9L164.0 262.4Z" fill="#1a1a1a"/><rect x="290" y="253.4" width="41.9" height="15.0" fill="#f2f2f2" stroke="#a0a0a0" stroke-width="0.900"/><rect x="320.4" y="253.9" width="11" height="14.0" fill="#dadada"/><path d="M320.4 253.9V267.9" stroke="#bcbcbc" stroke-width="0.800"/><path d="M323.1 259.4L325.9 255.9L328.7 259.4ZM323.1 262.4L325.9 265.9L328.7 262.4Z" fill="#1a1a1a"/><rect x="335.4" y="253.4" width="41.9" height="15.0" fill="#f2f2f2" stroke="#a0a0a0" stroke-width="0.900"/><rect x="365.8" y="253.9" width="11" height="14.0" fill="#dadada"/><path d="M365.8 253.9V267.9" stroke="#bcbcbc" stroke-width="0.800"/><path d="M368.5 259.4L371.3 255.9L374.1 259.4ZM368.5 262.4L371.3 265.9L374.1 262.4Z" fill="#1a1a1a"/><g transform="translate(171.5,254.2) scale(0.88)"><circle cx="6.800" cy="6.800" r="4.600" fill="#fff" stroke="#333" stroke-width="1.600"/><path d="M10.300 10.300L14.300 14.300" stroke="#333" stroke-width="2.500" stroke-linecap="round"/><circle cx="6.800" cy="6.800" r="1.500" fill="#0a5fc2"/></g><path d="M275.5 257.5H283.5L279.5 261.0ZM275.5 261.2H283.5L279.5 265.0Z" fill="#0a5fc2"/><rect x="5.2" y="272.4" width="372" height="225.500" fill="#2a2a2a"/><rect x="6.5" y="273.4" width="369.20000000000005" height="213.50000000000006" fill="#070707"/><path d="M52.65 273.4V486.9M6.5 300.09H375.7" stroke="#343434" stroke-width="1" stroke-dasharray="1 1.500"/><path d="M98.8 273.4V486.9M6.5 326.77H375.7" stroke="#3e3e3e" stroke-width="1"/><path d="M144.95 273.4V486.9M6.5 353.46H375.7" stroke="#343434" stroke-width="1" stroke-dasharray="1 1.500"/><path d="M191.1 273.4V486.9M6.5 380.15H375.7" stroke="#3e3e3e" stroke-width="1"/><path d="M237.25 273.4V486.9M6.5 406.84H375.7" stroke="#343434" stroke-width="1" stroke-dasharray="1 1.500"/><path d="M283.4 273.4V486.9M6.5 433.53H375.7" stroke="#3e3e3e" stroke-width="1"/><path d="M329.55 273.4V486.9M6.5 460.21H375.7" stroke="#343434" stroke-width="1" stroke-dasharray="1 1.500"/><path d="M30.4 303.7V382.46" stroke="#10b810" stroke-width="1.700"/><polygon points="30.1,337.7 29.7,377.98 27.7,416.78 26.7,455.57 24.8,480.93 23.8,486.9 24.7,486.9 25.7,480.93 27.7,455.57 29.3,416.78 31.1,377.98 31.0,337.7" fill="#28c030"/><polygon points="32.5,337.7 33.2,377.98 33.6,416.78 35.6,455.57 38.2,480.93 40.2,486.9 42.4,486.9 40.5,480.93 37.5,455.57 35.5,416.78 34.6,377.98 33.2,337.7" fill="#e2a4da"/><polygon points="31.0,337.7 31.1,377.98 29.3,416.78 27.7,455.57 25.7,480.93 24.7,486.9 40.2,486.9 38.2,480.93 35.6,455.57 33.6,416.78 33.2,377.98 32.5,337.7" fill="#c8e6c8"/><polygon points="31.7,352.62 32.9,352.62 34.9,464.52 35.7,486.9 31.3,486.9" fill="#e4f2e4"/><path d="M33.7 357.1v10.444000000000004M35.2 412.3v11.936000000000003M36.7 451.09v7.460000000000003" stroke="#1888c0" stroke-width="1.200"/><path d="M29.9 367.54v10.444000000000004" stroke="#c8a020" stroke-width="1.100"/><path d="M32.2 333.7v6" stroke="#d02020" stroke-width="1.200"/><path d="M30.3 400.36V486.9M40.5 483.4V486.9" stroke="#1c1c1c" stroke-width="0.600"/><path d="M41.7 486.1H54.7" stroke="#b8d8b8" stroke-width="1.200"/><path d="M54.7 486.1H68.7" stroke="#a05858" stroke-width="1" stroke-dasharray="3 2"/><path d="M6.5 487.4H375.7" stroke="#8cc49c" stroke-width="1"/><path d="M6.5 471.5H375.7M30.3 273.4V486.9" stroke="#8a8a8a" stroke-width="1"/><path d="M6.5 486.9L375.7 273.4" stroke="#c8c8c8" stroke-width="1"/><rect x="6.5" y="487.9" width="369.200" height="9" fill="url(#hgrad)"/><path d="M6.5 496.7V491.7L10.5 496.7Z" fill="#111" stroke="#ddd" stroke-width="0.800"/><path d="M187.5 496.7L191 491.2L194.5 496.7Z" fill="#777" stroke="#ddd" stroke-width="0.800"/><path d="M375.5 496.7V491.7L371.5 496.7Z" fill="#eee" stroke="#333" stroke-width="0.800"/><rect x="5.3" y="517.0" width="89.4" height="14.3" rx="1.200" fill="url(#cbg2)" stroke="#9a9a9a" stroke-width="0.900"/><path d="M80.7 518.0V530.3" stroke="#c0c0c0" stroke-width="0.900"/><path d="M84.1 522.35H91.3L87.7 526.55Z" fill="#1a1a1a"/><rect x="98.3" y="517.0" width="53.3" height="14.3" rx="1.200" fill="url(#cbg2)" stroke="#9a9a9a" stroke-width="0.900"/><path d="M138.0 518.0V530.3" stroke="#c0c0c0" stroke-width="0.900"/><path d="M141.2 522.35H148.4L144.8 526.55Z" fill="#1a1a1a"/><rect x="287.3" y="516.5" width="15.4" height="15.2" fill="#e9e9e9" stroke="#9c9c9c" stroke-width="0.900"/><rect x="306" y="516.5" width="15.3" height="15.2" fill="#e9e9e9" stroke="#9c9c9c" stroke-width="0.900"/><rect x="324.7" y="516.5" width="15.3" height="15.2" fill="#e9e9e9" stroke="#9c9c9c" stroke-width="0.900"/><rect x="343.4" y="516.5" width="15.3" height="15.2" fill="#e9e9e9" stroke="#9c9c9c" stroke-width="0.900"/><rect x="362" y="516.5" width="15.3" height="15.2" fill="#e9e9e9" stroke="#9c9c9c" stroke-width="0.900"/><g transform="translate(289.0,518.1) scale(0.73)"><path d="M1 0V15.500H16" stroke="#333" stroke-width="1.400" fill="none"/><path d="M2 15V3C3 9 5 12 8 12C11 12 13 8 14 3V15Z" fill="#8a8a8a"/><path d="M8 3H13M8 3L10.500 1M8 3L10.500 5" stroke="#111" stroke-width="1.500" fill="none"/></g><g transform="translate(307.7,518.1) scale(0.73)"><path d="M1 0V15.500H16" stroke="#333" stroke-width="1.400" fill="none"/><path d="M2 15V1L6 15Z" fill="#e01010"/><path d="M5 15L8 8L11 15Z" fill="#10b010"/><path d="M10 15L13 5L15 9V15Z" fill="#1020e0"/></g><g transform="translate(326.4,518.1) scale(0.73)"><path d="M1 0V15.500H16" stroke="#333" stroke-width="1.400" fill="none"/><path d="M2 15V8C5 8 7 12 10 12C12 12 13 10 14 7V15Z" fill="#8a8a8a"/><path d="M2 7L5 2L8 7Z" fill="#e01010"/><path d="M6 7L9 4L11 7Z" fill="#10b010"/><path d="M9 7L14 2V7Z" fill="#1020e0"/></g><g transform="translate(345.1,518.1) scale(0.73)"><path d="M1 0V15.500H16" stroke="#333" stroke-width="1.400" fill="none"/><path d="M5 15C7 9 9 9 11 12C12.500 13 14 10 14.500 6V15Z" fill="#8a8a8a"/><path d="M2 14.500C3 6 8 2 15 1.500" stroke="#1020e0" stroke-width="1.500" fill="none"/></g><g transform="translate(363.7,518.1) scale(0.73)"><path d="M1 1V15M4.700 1V15M8.400 1V15M12.100 1V15M15.500 1V15M1 1H15.500M1 4.700H15.500M1 8.400H15.500M1 12.100H15.500" stroke="#2838f0" stroke-width="1" fill="none"/><path d="M0.500 15.300H16" stroke="#222" stroke-width="1.200"/></g><rect x="5.3" y="535.5" width="372.0" height="16.4" rx="1.200" fill="url(#cbg2)" stroke="#9a9a9a" stroke-width="0.900"/><path d="M364.3 536.5V550.9" stroke="#c0c0c0" stroke-width="0.900"/><path d="M367.2 541.9H374.4L370.8 546.1Z" fill="#1a1a1a"/><rect x="11.5" y="539.7" width="8.500" height="8.500" fill="#f4f4f4" stroke="#555" stroke-width="1.300"/><rect x="11" y="539.2" width="9.500" height="2.500" fill="#555"/><rect x="7.6" y="558.7" width="9" height="9" fill="#f00000" stroke="#222" stroke-width="0.800"/><rect x="42.4" y="558.7" width="9" height="9" fill="#00e800" stroke="#222" stroke-width="0.800"/><rect x="77.8" y="558.7" width="9" height="9" fill="#0000f0" stroke="#222" stroke-width="0.800"/><rect x="110.5" y="556.2" width="54.0" height="14.2" fill="#f4f4f4" stroke="#9c9c9c" stroke-width="0.900"/><rect x="113" y="558.7" width="9" height="9" fill="#0000f0" stroke="#222" stroke-width="0.800"/><rect x="113.4" y="559.1" width="2.800" height="8.200" fill="#f00000"/><rect x="116.2" y="559.1" width="2.800" height="8.200" fill="#00d000"/><rect x="170.5" y="558.7" width="9" height="9" fill="#e8e8f0" stroke="#222" stroke-width="0.800"/><rect x="171" y="559.2" width="8" height="8" fill="url(#chk)"/><rect x="305.7" y="555.7" width="15.3" height="15" fill="#f6f6f6" stroke="#9c9c9c" stroke-width="0.900"/><g transform="translate(313.3,563.2) scale(0.9) translate(-8,-8)"><path d="M8 8L8 1.500" stroke="#222" stroke-width="0.900" transform="rotate(0 8 8)"/><path d="M8 8L8 1.500" stroke="#222" stroke-width="0.900" transform="rotate(45 8 8)"/><path d="M8 8L8 1.500" stroke="#222" stroke-width="0.900" transform="rotate(90 8 8)"/><path d="M8 8L8 1.500" stroke="#222" stroke-width="0.900" transform="rotate(135 8 8)"/><path d="M8 8L8 1.500" stroke="#222" stroke-width="0.900" transform="rotate(180 8 8)"/><path d="M8 8L8 1.500" stroke="#222" stroke-width="0.900" transform="rotate(225 8 8)"/><path d="M8 8L8 1.500" stroke="#222" stroke-width="0.900" transform="rotate(270 8 8)"/><path d="M8 8L8 1.500" stroke="#222" stroke-width="0.900" transform="rotate(315 8 8)"/><circle cx="8" cy="8" r="1.600" fill="#f6f6f6"/></g><g transform="translate(332,563.2) scale(0.85) translate(-8,-8)"><path d="M8 0.500V15.500M0.500 8H15.500" stroke="#000" stroke-width="1.400"/><rect x="3.200" y="3.200" width="9.600" height="9.600" fill="#000" stroke="#000" stroke-width="1.400"/><path d="M8 3.500V12.500M3.500 8H12.500" stroke="#9a9a9a" stroke-width="1.100"/></g><g transform="translate(351,563.2) scale(0.85) translate(-8,-8)"><path d="M8 0.500V15.500M0.500 8H15.500" stroke="#555" stroke-width="1.400"/><rect x="3.200" y="3.200" width="9.600" height="9.600" fill="#9a9a9a" stroke="#555" stroke-width="1.400"/><path d="M8 3.500V12.500M3.500 8H12.500" stroke="#555" stroke-width="1.100"/></g><g transform="translate(369.6,563.2) scale(0.85) translate(-8,-8)"><path d="M8 0.500V15.500M0.500 8H15.500" stroke="#222" stroke-width="1.400"/><rect x="3.200" y="3.200" width="9.600" height="9.600" fill="#f6f6f6" stroke="#222" stroke-width="1.400"/><path d="M8 3.500V12.500M3.500 8H12.500" stroke="#222" stroke-width="1.100"/></g><g transform="translate(326.5,576.1)"><path d="M0.500 0V11.500H11.500" stroke="#333" stroke-width="1" fill="none"/><path d="M2 11L6 1.500L10.500 11Z" fill="#777"/><path d="M3.8 0.500V11" stroke="#f09020" stroke-width="1.200"/></g><g transform="translate(345.5,576.1)"><path d="M0.500 0V11.500H11.500" stroke="#333" stroke-width="1" fill="none"/><path d="M1 11V2L4.500 11ZM5 11L8.500 2L10.500 11Z" fill="#777"/><path d="M4.2 0.500V11" stroke="#f09020" stroke-width="1.200"/></g><g transform="translate(370.3,582.1)"><path d="M-5.800 0L-2.200 -3.800H5.500V3.800H-2.200Z" fill="#444"/><path d="M-0.500 -1.900L3.300 1.900M3.300 -1.900L-0.500 1.900" stroke="#eee" stroke-width="1.500"/></g><g transform="translate(326.5,594.9)"><path d="M0.500 0V11.500H11.500" stroke="#333" stroke-width="1" fill="none"/><path d="M1 11V1.500L5 11Z" fill="#777"/><path d="M5 11L7 6L8 11Z" fill="#999"/><path d="M7.6 0.500V11" stroke="#f09020" stroke-width="1.200"/></g><g transform="translate(345.5,594.9)"><path d="M0.500 0V11.500H11.500" stroke="#333" stroke-width="1" fill="none"/><path d="M1 11V2L4.500 11ZM5 11L8.500 2L10.500 11Z" fill="#777"/><path d="M8 0.500V11" stroke="#f09020" stroke-width="1.200"/></g><g transform="translate(370.3,600.9)"><path d="M-5.800 0L-2.200 -3.800H5.500V3.800H-2.200Z" fill="#444"/><path d="M-0.500 -1.900L3.300 1.900M3.300 -1.900L-0.500 1.900" stroke="#eee" stroke-width="1.500"/></g><g transform="translate(142,619.7)"><path d="M-5.800 0L-2.200 -3.800H5.500V3.800H-2.200Z" fill="#444"/><path d="M-0.500 -1.900L3.300 1.900M3.300 -1.900L-0.500 1.900" stroke="#eee" stroke-width="1.500"/></g><rect x="276.9" y="611.9" width="81.800" height="15.300" rx="1.200" fill="url(#cbg2)" stroke="#9a9a9a" stroke-width="0.900"/><path d="M366 619.0L370 615.0L374 619.0ZM366 623.5L370 619.5L374 623.5Z" fill="#0a5fc2"/><rect x="134" y="637.0" width="222" height="3.200" rx="1.500" fill="#a2a2a2" stroke="#909090" stroke-width="0.600"/><circle cx="354.4" cy="638.6" r="4" fill="#dedede" stroke="#8c8c8c" stroke-width="0.900"/><g transform="translate(370.3,638.5)"><path d="M-5.800 0L-2.200 -3.800H5.500V3.800H-2.200Z" fill="#444"/><path d="M-0.500 -1.900L3.300 1.900M3.300 -1.900L-0.500 1.900" stroke="#eee" stroke-width="1.500"/></g><rect x="136" y="655.5" width="222.500" height="3.200" rx="1.500" fill="#e2e2e2" stroke="#a4a4a4" stroke-width="0.700"/><circle cx="137.8" cy="657.2" r="4" fill="#dedede" stroke="#8c8c8c" stroke-width="0.900"/><g transform="translate(370.3,657.2)"><path d="M-5.800 0L-2.200 -3.800H5.500V3.800H-2.200Z" fill="#444"/><path d="M-0.500 -1.900L3.300 1.900M3.300 -1.900L-0.500 1.900" stroke="#eee" stroke-width="1.500"/></g><path d="M8.7 672.7V681.2H17Z" fill="#0a5fc2"/><rect x="28.3" y="672.7" width="8.600" height="8.400" fill="#0a5fc2"/><circle cx="52" cy="676.9" r="3.600" fill="none" stroke="#0a5fc2" stroke-width="1.400"/><rect x="307" y="673.0" width="7.400" height="7.400" fill="none" stroke="#0a5fc2" stroke-width="1.400"/><path d="M326.5 673.0H331L334 676.0V680.5H326.5Z" fill="none" stroke="#0a5fc2" stroke-width="1.400"/><rect x="341.4" y="668.9" width="16.200" height="15.400" fill="#f4f4f4" stroke="#a8a8a8" stroke-width="0.900"/><path d="M345.5 676.7L348.3 679.7L354 673.5" fill="none" stroke="#0a5fc2" stroke-width="1.900"/><g transform="translate(369.4,676.6) scale(1,1)"><path d="M1.800 1.800L5 5" stroke="#0a5fc2" stroke-width="1.400"/><path d="M0.800 4V0.800H4Z" fill="#0a5fc2"/></g><g transform="translate(369.4,676.6) scale(-1,1)"><path d="M1.800 1.800L5 5" stroke="#0a5fc2" stroke-width="1.400"/><path d="M0.800 4V0.800H4Z" fill="#0a5fc2"/></g><g transform="translate(369.4,676.6) scale(1,-1)"><path d="M1.800 1.800L5 5" stroke="#0a5fc2" stroke-width="1.400"/><path d="M0.800 4V0.800H4Z" fill="#0a5fc2"/></g><g transform="translate(369.4,676.6) scale(-1,-1)"><path d="M1.800 1.800L5 5" stroke="#0a5fc2" stroke-width="1.400"/><path d="M0.800 4V0.800H4Z" fill="#0a5fc2"/></g></svg><span id="h1" class="lbl" style="left:117px;top:4.3px;transform-origin:0 50%;font-size:9.500px;font-weight:bold;font-size:10px;color:#fff">HistogramTransformation</span><span id="h2" class="lbl" style="left:84.9px;top:255.4px;transform-origin:0 50%;font-size:9.500px;">1</span><span id="h3" class="lbl" style="left:130.2px;top:255.4px;transform-origin:0 50%;font-size:9.500px;">1</span><span id="h4" class="lbl" style="left:294.6px;top:255.4px;transform-origin:0 50%;font-size:9.500px;">1</span><span id="h5" class="lbl" style="left:340.0px;top:255.4px;transform-origin:0 50%;font-size:9.500px;">1</span><div class="abs" style="left:5.3px;top:502.1px;width:372px;height:10.5px;background:#d6d6d6;box-shadow:inset 1px 1px 0 #b4b4b4,inset -1px -1px 0 #ececec"></div><span id="h6" class="lbl" style="left:11.3px;top:501.9px;transform-origin:0 50%;font-size:9.500px;color:#222">x=0.0657(4304-4442) 294437, %21.7040 | y=0.0733</span><span id="h7" class="lbl" style="left:10px;top:518.9px;transform-origin:0 50%;font-size:9.500px;">16-bit (64K)</span><span id="h8" class="lbl" style="left:102.7px;top:518.9px;transform-origin:0 50%;font-size:9.500px;">Lines</span><span id="h9" class="lbl" style="left:26.7px;top:537.9px;transform-origin:0 50%;font-size:9.500px;">image_png_85fe2e4f3760aa8d5db4eeedb30272f5</span><span id="h10" class="lbl" style="left:18.5px;top:558.1px;transform-origin:0 50%;font-size:9.500px;">R</span><span id="h11" class="lbl" style="left:53.5px;top:558.1px;transform-origin:0 50%;font-size:9.500px;">G</span><span id="h12" class="lbl" style="left:88.8px;top:558.1px;transform-origin:0 50%;font-size:9.500px;">B</span><span id="h13" class="lbl" style="left:124px;top:558.1px;transform-origin:0 50%;font-size:9.500px;">RGB/K</span><span id="h14" class="lbl" style="left:182px;top:558.1px;transform-origin:0 50%;font-size:9.500px;">A</span><span id="h15" class="lbl" style="right:320.6px;top:576.4px;transform-origin:100% 50%;font-size:9.500px;">Shadows:</span><div class="abs" style="left:66.2px;top:574.4px;width:64.3px;height:15px;background:#f5f5f5;border:1px solid #a4a4a4;box-sizing:border-box"></div><span id="h16" class="lbl" style="left:70.7px;top:576.4px;transform-origin:0 50%;font-size:9.500px;">0.00000000</span><span id="h17" class="lbl" style="right:320.6px;top:595.2px;transform-origin:100% 50%;font-size:9.500px;">Highlights:</span><div class="abs" style="left:66.2px;top:593.2px;width:64.3px;height:15px;background:#f5f5f5;border:1px solid #a4a4a4;box-sizing:border-box"></div><span id="h18" class="lbl" style="left:70.7px;top:595.2px;transform-origin:0 50%;font-size:9.500px;">1.00000000</span><span id="h19" class="lbl" style="right:320.6px;top:614.0px;transform-origin:100% 50%;font-size:9.500px;">Midtones:</span><div class="abs" style="left:66.2px;top:612.0px;width:64.3px;height:15px;background:#f5f5f5;border:1px solid #a4a4a4;box-sizing:border-box"></div><span id="h20" class="lbl" style="left:70.7px;top:614.0px;transform-origin:0 50%;font-size:9.500px;">0.50000000</span><span id="h21" class="lbl" style="right:320.6px;top:632.7px;transform-origin:100% 50%;font-size:9.500px;">Low range:</span><div class="abs" style="left:66.2px;top:630.7px;width:64.3px;height:15px;background:#f5f5f5;border:1px solid #a4a4a4;box-sizing:border-box"></div><span id="h22" class="lbl" style="left:70.7px;top:632.7px;transform-origin:0 50%;font-size:9.500px;">0.0000000</span><span id="h23" class="lbl" style="right:320.6px;top:651.4px;transform-origin:100% 50%;font-size:9.500px;">High range:</span><div class="abs" style="left:66.2px;top:649.4px;width:64.3px;height:15px;background:#f5f5f5;border:1px solid #a4a4a4;box-sizing:border-box"></div><span id="h24" class="lbl" style="left:70.7px;top:651.4px;transform-origin:0 50%;font-size:9.500px;">1.0000000</span><div class="abs" style="left:133.8px;top:574.4px;width:187.2px;height:15px;background:#d6d6d6;box-shadow:inset 1px 1px 0 #b8b8b8,inset -1px -1px 0 #eeeeee"></div><span id="h25" class="lbl" style="left:201.7px;top:576.4px;transform-origin:0 50%;font-size:9.500px;color:#222">0, %0.0000</span><div class="abs" style="left:133.8px;top:593.2px;width:187.2px;height:15px;background:#d6d6d6;box-shadow:inset 1px 1px 0 #b8b8b8,inset -1px -1px 0 #eeeeee"></div><span id="h26" class="lbl" style="left:201.7px;top:595.2px;transform-origin:0 50%;font-size:9.500px;color:#222">0, %0.0000</span><span id="h27" class="lbl" style="left:283.3px;top:614.0px;transform-origin:0 50%;font-size:9.500px;">Auto Clip Setup</span></div>
<span id="wm1" class="abs" style="left:1147.500px;top:761px;font-size:19.400px;color:rgba(255,255,255,0.32);white-space:nowrap;letter-spacing:0">Activer Windows</span>
<span id="wm2" class="abs" style="left:1148px;top:786.500px;font-size:13.700px;color:rgba(255,255,255,0.30);white-space:nowrap;">Accédez aux paramètres pour activer Windows.</span>

<div id="statusbar" class="abs"><svg class="abs" style="left:0;top:0" width="1500" height="26" viewBox="0 817 1500 26">
<defs><pattern id="gripp2" width="3.125" height="3.125" patternUnits="userSpaceOnUse"><rect x="0.300" y="0.300" width="1.100" height="1.100" fill="#808080"/><rect x="1.860" y="1.860" width="1.100" height="1.100" fill="#808080"/></pattern>
<linearGradient id="cbg3" x1="0" y1="0" x2="0" y2="1"><stop offset="0" stop-color="#f6f6f6"/><stop offset="1" stop-color="#dcdcdc"/></linearGradient></defs>
<rect x="4.9" y="820.600" width="5.200" height="17.500" fill="url(#gripp2)"/>
<rect x="258.9" y="820.600" width="5.200" height="17.500" fill="url(#gripp2)"/>
<rect x="344.9" y="820.600" width="5.200" height="17.500" fill="url(#gripp2)"/>
<rect x="495.9" y="820.600" width="5.200" height="17.500" fill="url(#gripp2)"/>
<rect x="833.4" y="820.600" width="5.200" height="17.500" fill="url(#gripp2)"/>
<rect x="15.800" y="822.500" width="214.600" height="14.500" rx="1.200" fill="url(#cbg3)" stroke="#9a9a9a" stroke-width="0.900"/>
<path d="M215.500 823.500V836" stroke="#c4c4c4" stroke-width="0.900"/><path d="M219 828H227L223 832.500Z" fill="#1a1a1a"/>
<rect x="22.500" y="825.800" width="8" height="8" fill="#f4f4f4" stroke="#444" stroke-width="1.300"/><rect x="22" y="825.300" width="9" height="2.500" fill="#444"/>
<rect x="233.700" y="822.500" width="15.900" height="14.500" fill="#fafafa" stroke="#8c8c8c" stroke-width="0.900"/>
<path d="M237.500 827L239.800 825.500V834.500H237.500Z" fill="#444"/><rect x="239.800" y="825.500" width="6" height="9" fill="#fff" stroke="#444" stroke-width="1"/>
<rect x="269.300" y="822.600" width="15" height="15" fill="#fcb060" stroke="#c8c8c8" stroke-width="0.800"/><rect x="282" y="823" width="2.500" height="3.500" fill="#0a8a1a"/><rect x="282" y="833.500" width="2.500" height="3.500" fill="#0a8a1a"/>
<rect x="287.300" y="822.600" width="15" height="15" fill="#f6f6f6" stroke="#c8c8c8" stroke-width="0.800"/>
<rect x="305.300" y="822.600" width="15" height="15" fill="#f6f6f6" stroke="#c8c8c8" stroke-width="0.800"/>
<rect x="323.300" y="822.600" width="15" height="15" fill="#f6f6f6" stroke="#c8c8c8" stroke-width="0.800"/>
<g transform="translate(807,822)"><path d="M8 1.800v12.400M1.800 8h12.400" stroke="#3c3c3c" stroke-width="1.500"/><rect x="5.700" y="5.700" width="4.600" height="4.600" fill="#f0f0f0" stroke="#6a6a6a" stroke-width="0.900"/><path d="M8 6.500v3M6.500 8h3" stroke="#9a9a9a" stroke-width="0.700"/></g>
</svg>
<span id="stcombo" class="abs mono" style="left:38px;top:7.8px;font-size:9.130px;color:#222;width:168px;overflow:hidden;white-space:nowrap;">image_png_85fe2e4f3760aa8d5db4eeedb30272f5</span>
<span id="stinfo" class="abs mono" style="left:852.300px;top:7.8px;font-size:9.130px;color:#222;white-space:pre;">w:850 · h:532 · n:3 · i8 · RGB · 1.294 MiB</span>
</div>
<div id="statusbot" class="abs"></div>
</body>
</html>
